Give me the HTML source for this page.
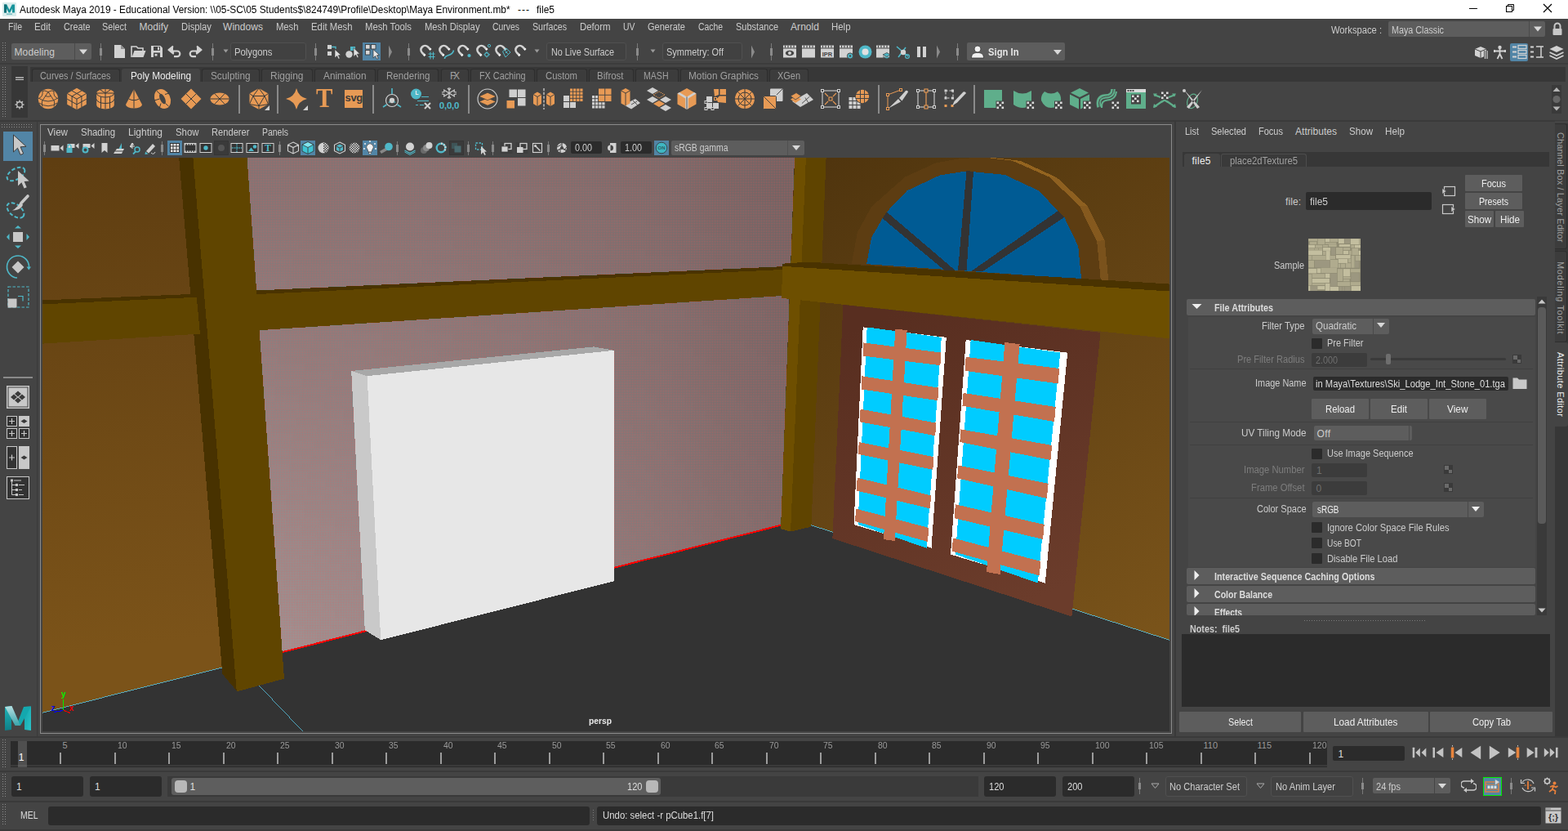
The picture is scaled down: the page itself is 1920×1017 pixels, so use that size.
<!DOCTYPE html>
<html><head><meta charset="utf-8"><title>Autodesk Maya 2019</title>
<style>
html,body{margin:0;padding:0;background:#444444;}
body{width:1920px;height:1017px;overflow:hidden;position:relative;font-family:"Liberation Sans",sans-serif;}
#app{position:absolute;left:0;top:0;width:1920px;height:1017px;overflow:hidden;background:#444444;}
#app div,#app span,#app svg{position:absolute;box-sizing:border-box;}
#app span{white-space:pre;line-height:1;}
</style></head><body><div id="app">
<div style="left:0px;top:0px;width:1920px;height:23px;background:#ffffff;"></div>
<div style="left:0px;top:77px;width:1920px;height:2px;background:#3c3c3c;"></div>
<div style="left:37px;top:82px;width:1880px;height:18px;background:#373737;"></div>
<div style="left:0px;top:147px;width:1920px;height:2px;background:#3a3a3a;"></div>
<div style="left:49px;top:152px;width:1386px;height:746px;background:transparent;border:1px solid #8a8a8a;"></div>
<div style="left:44.5px;top:149px;width:1.5px;height:752px;background:#3a3a3a;"></div>
<div style="left:1438px;top:149px;width:2px;height:752px;background:#3a3a3a;"></div>
<div style="left:0px;top:901px;width:1920px;height:2px;background:#3a3a3a;"></div>
<svg style="left:52px;top:193px" width="1380" height="702" viewBox="52 193 1380 702" shape-rendering="crispEdges">
<defs>
<pattern id="sel" x="0" y="1" width="2" height="2" patternUnits="userSpaceOnUse"><rect width="1" height="1" fill="#fa5050" fill-opacity="0.6"/></pattern>
<linearGradient id="wh" gradientUnits="userSpaceOnUse" x1="320" y1="0" x2="950" y2="0"><stop offset="0" stop-color="#777777"/><stop offset="0.25" stop-color="#777777"/><stop offset="0.5" stop-color="#747474"/><stop offset="0.75" stop-color="#6f6f6f"/><stop offset="1" stop-color="#666666"/></linearGradient>
<linearGradient id="wv" gradientUnits="userSpaceOnUse" x1="0" y1="205" x2="0" y2="805"><stop offset="0" stop-color="#ffffff" stop-opacity="0"/><stop offset="1" stop-color="#ffffff" stop-opacity="0.25"/></linearGradient>
<linearGradient id="wmh" gradientUnits="userSpaceOnUse" x1="320" y1="0" x2="950" y2="0"><stop offset="0" stop-color="#ffffff" stop-opacity="1"/><stop offset="1" stop-color="#ffffff" stop-opacity="0.33"/></linearGradient>
<mask id="wm" maskUnits="userSpaceOnUse" x="52" y="193" width="1380" height="702"><rect x="52" y="193" width="1380" height="702" fill="url(#wmh)"/></mask>
<linearGradient id="lw" gradientUnits="userSpaceOnUse" x1="60" y1="198" x2="131.5" y2="794"><stop offset="0" stop-color="#5f3e11"/><stop offset="1" stop-color="#7b5319"/></linearGradient>
<linearGradient id="rw" gradientUnits="userSpaceOnUse" x1="1015" y1="195" x2="1398" y2="781"><stop offset="0" stop-color="#50350e"/><stop offset="1" stop-color="#79531a"/></linearGradient>
<linearGradient id="wf" gradientUnits="userSpaceOnUse" x1="1100" y1="380" x2="1250" y2="740"><stop offset="0" stop-color="#582e20"/><stop offset="1" stop-color="#6b3c2b"/></linearGradient>
</defs>
<rect x="52" y="193" width="1380" height="702" fill="#333333"/>
<polygon points="51,193 305,193 345,800 271.7,817 51,872.5" fill="url(#lw)" />
<polygon points="300,193 975,193 958,642.3 345.6,798.2" fill="url(#wh)" />
<polygon points="300,193 975,193 958,642.3 345.6,798.2" fill="url(#wv)" mask="url(#wm)"/>
<polygon points="300,193 975,193 958,642.3 345.6,798.2" fill="url(#sel)" />
<line x1="345.6" y1="798.2" x2="956" y2="642.8" stroke="#ff0000" stroke-width="2"/>
<polygon points="973,193 1433,193 1433,783.8 993.4,642.8 956,647" fill="url(#rw)" />
<line x1="51" y1="872.5" x2="271.7" y2="817" stroke="#5cd0f0" stroke-width="0.75"/>
<line x1="315.6" y1="837.2" x2="370.7" y2="895" stroke="#5cd0f0" stroke-width="0.75"/>
<line x1="993.4" y1="642.8" x2="1433" y2="783.6" stroke="#5cd0f0" stroke-width="0.75"/>
<polygon points="305,356 313.7,355.5 958,326.2 958,330 305,360.5" fill="#4a3300" />
<polygon points="305,360.5 958,330 958,362 317.5,404.2 305,405" fill="#604500" />
<polygon points="219.2,193 236.9,193 290.5,846.3 272.4,825.0" fill="#483200" />
<polygon points="51,367.5 233,360 240.8,363.8 51,372.4" fill="#483200" />
<polygon points="51,372.4 240.8,363.8 244.9,408.6 51,420.7" fill="#604500" />
<polygon points="236.4,193 302.5,193 348,830.6 289.8,846.5" fill="#604500" />
<polygon points="973.3,193 986.9,193 968.1,650.6 956.1,647.2" fill="#6e4f00" />
<polygon points="986.9,193 1011.6,193 993.4,644.6 968.1,650.6" fill="#5f4400" />
<polygon points="1042.8,322.7 1049.9,284.4 1067.2,252.9 1108.1,216.7 1145.9,199.4 1177.3,193.9 1200,193 1213.4,193 1237.8,195.5 1250.3,197.1 1294.4,217.5 1331.4,252.1 1352.6,293.8 1357.3,343.4" fill="#5d3d12" />
<polygon points="1213.4,192.8 1237.8,195.5 1239.3,196.6 1213.4,193.6" fill="#94641f" />
<polygon points="1237.8,195.5 1250.3,197.1 1250.3,201.4 1239.3,196.6" fill="#94641f" />
<polygon points="1250.3,197.1 1294.4,217.5 1285,216.7 1250.3,201.4" fill="#94641f" />
<polygon points="1294.4,217.5 1331.4,252.1 1321.9,252.1 1285,216.7" fill="#8e6020" />
<polygon points="1331.4,252.1 1352.6,293.8 1343.2,295.4 1321.9,252.1" fill="#85591e" />
<polygon points="1352.6,293.8 1357.3,343.4 1347.9,343.4 1343.2,295.4" fill="#7a521c" />
<polygon points="1061.1,323.2 1067.1,290.7 1080.6,267.2 1085.8,259.4 1110.6,233.4 1150.9,214.4 1183.5,209.4 1230.4,213.9 1272,233.4 1295.5,258.1 1303.3,265.9 1320.2,301.1 1324.1,341.5" fill="#005b94" />
<polygon points="1183.5,209.4 1192,209.6 1183.5,331 1173,331" fill="#333333" />
<polygon points="1080.6,267.2 1085.8,259.4 1169.2,330.5 1156.1,330.5" fill="#333333" />
<polygon points="1295.5,258.1 1303.3,265.9 1203,332.3 1188.7,332.3" fill="#333333" />
<polygon points="958.2,322.7 990,320.6 1433,347.6 1433,356.6 958.2,326" fill="#4a3300" />
<polygon points="958.2,325.8 1433,356.6 1433,414.4 957,364.9" fill="#6d4f00" />
<polygon points="1032.4,373 1347.5,406.9 1312.4,754.5 1019.4,659" fill="url(#wf)" />
<polygon points="1056.7,400.4 1158.8,412.9 1140.5,670.7 1045.5,642" fill="#ffffff" />
<polygon points="1061.7,400.4 1152.8,412.9 1134.5,670.7 1050.5,642" fill="#00ccff" />
<polygon points="1096.3,402.5 1110.6,404.2 1095.7,662 1082,660" fill="#c27150" />
<polygon points="1057.3192052980132,419.4 1152.472575640031,431.6 1151.3652055857253,447.2 1056.5728476821193,435.5" fill="#c27150" />
<polygon points="1055.4231788079471,460.3 1149.4202094647012,474.6 1148.3128394103956,490.2 1054.676821192053,476.4" fill="#c27150" />
<polygon points="1053.5549668874173,500.6 1146.3678432893716,517.6 1145.260473235066,533.2 1052.8271523178807,516.3" fill="#c27150" />
<polygon points="1051.682119205298,541 1143.4148564778898,559.2 1142.3074864235841,574.8 1050.9960264900662,555.8" fill="#c27150" />
<polygon points="1049.6562913907285,584.7 1140.0643522110163,606.4 1138.9214895267648,622.5 1048.9284768211921,600.4" fill="#c27150" />
<polygon points="1047.9039735099338,622.5 1137.2533359193174,646 1136.0465865011638,663 1047.1854304635763,638" fill="#c27150" />
<polygon points="1182.7,416 1307.2,431.6 1279.8,713.6 1164,678.5" fill="#ffffff" />
<polygon points="1188.7,416 1298.2,431.6 1270.8,713.6 1170,678.5" fill="#00ccff" />
<polygon points="1230.4,419 1248.6,421.2 1224.5,703 1208,700" fill="#c27150" />
<polygon points="1182.7182476190476,436.8 1297.315035460993,451 1295.5272340425531,469.4 1181.5072,453.8" fill="#c27150" />
<polygon points="1179.5695238095238,481 1292.7483687943263,498 1290.9994326241135,516 1178.4510857142857,496.7" fill="#c27150" />
<polygon points="1176.4065523809525,525.4 1288.1817021276595,545 1286.432765957447,563 1175.2952380952381,541" fill="#c27150" />
<polygon points="1173.2578285714285,569.6 1283.6344680851064,591.8 1281.86609929078,610 1172.1393904761906,585.3" fill="#c27150" />
<polygon points="1169.8597714285715,617.3 1278.7568794326241,642 1277.0079432624113,660 1168.6558476190476,634.2" fill="#c27150" />
<polygon points="1166.9318857142857,658.4 1274.3845390070921,687 1272.684184397163,704.5 1165.7778285714285,674.6" fill="#c27150" />
<polygon points="430.2,454.0 727,424.4 752,428.8 449.6,460.2" fill="#a8a8a8" />
<polygon points="430.2,454.0 449.6,460.2 466.3,783.2 446.8,771.2" fill="#c9c9c9" />
<polygon points="449.6,460.2 752,428.8 752,711.2 466.3,783.2" fill="#e7e7e7" />
<line x1="77.5" y1="856" x2="77.5" y2="869" stroke="#00ee00" stroke-width="1.2"/>
<line x1="77" y1="869.5" x2="66" y2="871.5" stroke="#0000ee" stroke-width="1.2"/>
<line x1="78" y1="869.5" x2="86" y2="872.5" stroke="#ee0000" stroke-width="1.2"/>
<text x="75" y="852.5" font-family="Liberation Sans,sans-serif" font-size="10" font-weight="bold" fill="#00ee00">y</text>
<text x="62.5" y="869.5" font-family="Liberation Sans,sans-serif" font-size="10" font-weight="bold" fill="#0000ee">z</text>
<text x="84.5" y="870" font-family="Liberation Sans,sans-serif" font-size="10" font-weight="bold" fill="#ee0000">x</text>
</svg>
<span style="left:721.00px;top:876.69px;font-size:11px;color:#e8e8e8;font-weight:bold;transform:scaleX(0.9348);transform-origin:0 0;">persp</span>
<svg style="left:3px;top:3px" width="17" height="17" viewBox="0 0 17 17" ><rect x="0" y="0" width="17" height="17" rx="1" fill="#d9ecec"/><path d="M2 2.5 L5.2 2.5 L8.5 9 L11.8 2.5 L15 2.5 L15 12.5 L12 12.5 L12 7.5 L9.3 12.5 L7.7 12.5 L5 7.5 L5 12.5 L2 12.5 Z" fill="#17939b"/><path d="M2 2.5 L5.2 2.5 L5 12.5 L2 12.5 Z" fill="#0e6f77"/><rect x="5" y="13.6" width="7" height="1.2" fill="#5fb3b8"/></svg>
<span style="left:23.50px;top:5.84px;font-size:12px;color:#000000;transform:scaleX(0.9893);transform-origin:0 0;">Autodesk Maya 2019 - Educational Version: \\05-SC\05 Students$\824749\Profile\Desktop\Maya Environment.mb*</span>
<span style="left:634.00px;top:5.84px;font-size:12px;color:#000000;letter-spacing:1.007px;">---</span>
<span style="left:657.00px;top:5.84px;font-size:12px;color:#000000;transform:scaleX(0.9994);transform-origin:0 0;">file5</span>
<svg style="left:1790px;top:-1px" width="130" height="23" viewBox="0 0 130 23" ><path d="M9 11.5 H19" stroke="#000" stroke-width="1" fill="none"/><rect x="54.5" y="8.5" width="7" height="7" fill="none" stroke="#000" stroke-width="1"/><path d="M56.5 8.5 V6.5 H63.5 V13.5 H61.5" fill="none" stroke="#000" stroke-width="1"/><path d="M100 6 L110 16 M110 6 L100 16" stroke="#000" stroke-width="1.2" fill="none"/></svg>
<span style="left:9.50px;top:26.84px;font-size:12px;color:#cccccc;transform:scaleX(0.8792);transform-origin:0 0;">File</span>
<span style="left:42.00px;top:26.84px;font-size:12px;color:#cccccc;transform:scaleX(0.9672);transform-origin:0 0;">Edit</span>
<span style="left:77.50px;top:26.84px;font-size:12px;color:#cccccc;transform:scaleX(0.9024);transform-origin:0 0;">Create</span>
<span style="left:125.00px;top:26.84px;font-size:12px;color:#cccccc;transform:scaleX(0.8995);transform-origin:0 0;">Select</span>
<span style="left:170.50px;top:26.84px;font-size:12px;color:#cccccc;letter-spacing:0.032px;">Modify</span>
<span style="left:221.50px;top:26.84px;font-size:12px;color:#cccccc;transform:scaleX(0.9404);transform-origin:0 0;">Display</span>
<span style="left:273.00px;top:26.84px;font-size:12px;color:#cccccc;letter-spacing:0.054px;">Windows</span>
<span style="left:337.50px;top:26.84px;font-size:12px;color:#cccccc;transform:scaleX(0.9372);transform-origin:0 0;">Mesh</span>
<span style="left:380.50px;top:26.84px;font-size:12px;color:#cccccc;transform:scaleX(0.9465);transform-origin:0 0;">Edit Mesh</span>
<span style="left:446.50px;top:26.84px;font-size:12px;color:#cccccc;transform:scaleX(0.9426);transform-origin:0 0;">Mesh Tools</span>
<span style="left:519.50px;top:26.84px;font-size:12px;color:#cccccc;transform:scaleX(0.9372);transform-origin:0 0;">Mesh Display</span>
<span style="left:602.50px;top:26.84px;font-size:12px;color:#cccccc;transform:scaleX(0.8682);transform-origin:0 0;">Curves</span>
<span style="left:651.50px;top:26.84px;font-size:12px;color:#cccccc;transform:scaleX(0.8870);transform-origin:0 0;">Surfaces</span>
<span style="left:709.50px;top:26.84px;font-size:12px;color:#cccccc;transform:scaleX(0.9533);transform-origin:0 0;">Deform</span>
<span style="left:762.50px;top:26.84px;font-size:12px;color:#cccccc;transform:scaleX(0.8698);transform-origin:0 0;">UV</span>
<span style="left:792.50px;top:26.84px;font-size:12px;color:#cccccc;transform:scaleX(0.9195);transform-origin:0 0;">Generate</span>
<span style="left:854.50px;top:26.84px;font-size:12px;color:#cccccc;transform:scaleX(0.8649);transform-origin:0 0;">Cache</span>
<span style="left:900.50px;top:26.84px;font-size:12px;color:#cccccc;transform:scaleX(0.9170);transform-origin:0 0;">Substance</span>
<span style="left:968.00px;top:26.84px;font-size:12px;color:#cccccc;letter-spacing:0.063px;">Arnold</span>
<span style="left:1018.00px;top:26.84px;font-size:12px;color:#cccccc;transform:scaleX(0.9522);transform-origin:0 0;">Help</span>
<span style="left:1630.00px;top:30.84px;font-size:12px;color:#cccccc;transform:scaleX(0.9328);transform-origin:0 0;">Workspace :</span>
<div style="left:1700px;top:26px;width:192px;height:19px;background:#5d5d5d;border-radius:2px;"></div>
<div style="left:1872px;top:26px;width:1px;height:19px;background:#4a4a4a;"></div>
<span style="left:1703.50px;top:30.84px;font-size:12px;color:#cccccc;transform:scaleX(0.8970);transform-origin:0 0;">Maya Classic</span>
<svg style="left:1876.5px;top:31px" width="12" height="9" viewBox="0 0 12 9" ><path d="M1 1.5 H11 L6 7.5 Z" fill="#d8d8d8"/></svg>
<svg style="left:1898.5px;top:26px" width="16" height="19" viewBox="0 0 16 19" ><path d="M4.5 9 V6 a3.5 3.5 0 0 1 7 0 V9" fill="none" stroke="#c8c8c8" stroke-width="2"/><rect x="2.5" y="9" width="11" height="8" rx="1" fill="#c8c8c8"/></svg>
<svg style="left:3px;top:52px" width="4" height="23" viewBox="0 0 4 23" shape-rendering="crispEdges"><rect x="0" y="0" width="1" height="1" fill="#8c8c8c"/><rect x="3" y="0" width="1" height="1" fill="#8c8c8c"/><rect x="0" y="3" width="1" height="1" fill="#8c8c8c"/><rect x="3" y="3" width="1" height="1" fill="#8c8c8c"/><rect x="0" y="6" width="1" height="1" fill="#8c8c8c"/><rect x="3" y="6" width="1" height="1" fill="#8c8c8c"/><rect x="0" y="9" width="1" height="1" fill="#8c8c8c"/><rect x="3" y="9" width="1" height="1" fill="#8c8c8c"/><rect x="0" y="12" width="1" height="1" fill="#8c8c8c"/><rect x="3" y="12" width="1" height="1" fill="#8c8c8c"/><rect x="0" y="15" width="1" height="1" fill="#8c8c8c"/><rect x="3" y="15" width="1" height="1" fill="#8c8c8c"/><rect x="0" y="18" width="1" height="1" fill="#8c8c8c"/><rect x="3" y="18" width="1" height="1" fill="#8c8c8c"/><rect x="0" y="21" width="1" height="1" fill="#8c8c8c"/><rect x="3" y="21" width="1" height="1" fill="#8c8c8c"/></svg>
<div style="left:14px;top:53px;width:98px;height:20px;background:#5d5d5d;border-radius:2px;"></div>
<div style="left:91px;top:53px;width:1px;height:20px;background:#4a4a4a;"></div>
<span style="left:17.50px;top:57.84px;font-size:12px;color:#cccccc;letter-spacing:0.115px;">Modeling</span>
<svg style="left:96px;top:59px" width="12" height="9" viewBox="0 0 12 9" ><path d="M1 1.5 H11 L6 7.5 Z" fill="#d8d8d8"/></svg>
<div style="left:123px;top:53px;width:1px;height:21px;background:#7a7a7a;"></div>
<div style="left:122px;top:59px;width:3px;height:9px;background:#8a8a8a;"></div>
<svg style="left:139px;top:54px" width="16" height="18" viewBox="0 0 16 18" ><path d="M1 1 H9 L14 6 V17 H1 Z" fill="#d2d2d2"/><path d="M9 1 V6 H14" fill="#8f8f8f"/></svg>
<svg style="left:160px;top:55px" width="19" height="16" viewBox="0 0 19 16" ><path d="M1 15 V2 H7 L9 4 H15 V7" fill="none" stroke="#d2d2d2" stroke-width="1.6"/><path d="M4.5 7 H18.5 L15.5 15 H1.5 Z" fill="#d2d2d2"/></svg>
<svg style="left:184px;top:55px" width="16" height="16" viewBox="0 0 16 16" ><path d="M1 1 H12.5 L15 3.5 V15 H1 Z" fill="#d2d2d2"/><rect x="4" y="2" width="8" height="5" fill="#444"/><rect x="9" y="2.6" width="2" height="3.6" fill="#d2d2d2"/><rect x="4" y="9.5" width="8" height="5.5" fill="#444"/><rect x="5.5" y="11" width="3" height="2.5" fill="#d2d2d2"/></svg>
<svg style="left:205px;top:55px" width="19" height="16" viewBox="0 0 19 16" ><path d="M7 1.5 L1.5 6 L7 10.5 V7.5 H12 a3.3 3.3 0 0 1 0 6.6 H8" fill="none" stroke="#d2d2d2" stroke-width="2.2" stroke-linejoin="round"/><path d="M7 1.5 L1.5 6 L7 10.5 Z" fill="#d2d2d2"/></svg>
<svg style="left:229px;top:55px" width="19" height="16" viewBox="0 0 19 16" ><path d="M12 1.5 L17.5 6 L12 10.5 V7.5 H7 a3.3 3.3 0 0 0 0 6.6 H11" fill="none" stroke="#d2d2d2" stroke-width="2.2" stroke-linejoin="round"/><path d="M12 1.5 L17.5 6 L12 10.5 Z" fill="#d2d2d2"/></svg>
<div style="left:260px;top:53px;width:1px;height:21px;background:#7a7a7a;"></div>
<div style="left:259px;top:59px;width:3px;height:9px;background:#8a8a8a;"></div>
<svg style="left:273px;top:60px" width="7" height="5" viewBox="0 0 7 5" ><path d="M0.5 0.5 H6.5 L3.5 4.5 Z" fill="#9a9a9a"/></svg>
<div style="left:282px;top:52px;width:93px;height:22px;background:#414141;border:1px solid #505050;border-radius:3px;"></div>
<span style="left:287.00px;top:57.84px;font-size:12px;color:#cccccc;transform:scaleX(0.9420);transform-origin:0 0;">Polygons</span>
<div style="left:386px;top:53px;width:1px;height:21px;background:#7a7a7a;"></div>
<div style="left:385px;top:59px;width:3px;height:9px;background:#8a8a8a;"></div>
<svg style="left:400px;top:54px" width="18" height="19" viewBox="0 0 18 19" ><rect x="1" y="1" width="5" height="5" fill="#d2d2d2"/><rect x="1" y="9" width="5" height="5" fill="#d2d2d2"/><path d="M6 3.5 H11 V6" fill="none" stroke="#4fb8c8" stroke-width="1.3"/><path d="M10 6.5 L10 17 L12.6 14.4 L14.5 18.3 L16.2 17.5 L14.4 13.7 L17.6 13.4 Z" fill="#e0e0e0" stroke="#333" stroke-width="0.6"/></svg>
<svg style="left:422px;top:54px" width="20" height="19" viewBox="0 0 20 19" ><circle cx="5.5" cy="12.5" r="4.2" fill="#d2d2d2"/><path d="M7 8 V3 H13 V8" fill="#4fb8c8"/><path d="M11 4.5 L11 15.5 L13.6 12.9 L15.5 16.8 L17.2 16 L15.4 12.2 L18.6 11.9 Z" fill="#e0e0e0" stroke="#333" stroke-width="0.6"/></svg>
<div style="left:444px;top:52px;width:22px;height:22px;background:#5285a6;"></div>
<svg style="left:446px;top:53px" width="20" height="20" viewBox="0 0 20 20" ><rect x="1.5" y="1.5" width="5.5" height="5.5" fill="#d8d8d8" stroke="#333" stroke-width="0.8"/><rect x="8.5" y="1.5" width="5.5" height="5.5" fill="#d8d8d8" stroke="#333" stroke-width="0.8"/><rect x="1.5" y="8.5" width="5.5" height="5.5" fill="#d8d8d8" stroke="#333" stroke-width="0.8"/><path d="M11 7.5 L11 18 L13.6 15.4 L15.5 19.3 L17.2 18.5 L15.4 14.7 L18.6 14.4 Z" fill="#e8e8e8" stroke="#333" stroke-width="0.7"/></svg>
<svg style="left:475px;top:55px" width="6" height="17" viewBox="0 0 6 17" ><path d="M1 0.5 L5 8.5 L1 16.5 Z" fill="#8a8a8a"/></svg>
<div style="left:500px;top:53px;width:1px;height:21px;background:#7a7a7a;"></div>
<div style="left:499px;top:59px;width:3px;height:9px;background:#8a8a8a;"></div>
<svg style="left:514px;top:53px" width="21" height="21" viewBox="0 0 21 21" ><path d="M12.7 10.1 L10 7.4 A5 5 0 0 0 3 14.6 L5.7 17.3" transform="translate(0,-3)" fill="none" stroke="#d2d2d2" stroke-width="2.7"/><path d="M13.6 11 L12.2 9.6 M6.6 18.2 L5.2 16.8" transform="translate(0,-3)" stroke="#f4f4f4" stroke-width="2.7"/><path d="M13 10.5 V19.5 M16.5 10.5 V19.5 M10.5 13 H18.5 M10.5 16.5 H18.5" stroke="#4fb8c8" stroke-width="1.1" fill="none"/></svg>
<svg style="left:537px;top:53px" width="21" height="21" viewBox="0 0 21 21" ><path d="M12.7 10.1 L10 7.4 A5 5 0 0 0 3 14.6 L5.7 17.3" transform="translate(0,-3)" fill="none" stroke="#d2d2d2" stroke-width="2.7"/><path d="M13.6 11 L12.2 9.6 M6.6 18.2 L5.2 16.8" transform="translate(0,-3)" stroke="#f4f4f4" stroke-width="2.7"/><path d="M7.5 19 C7 13 17 17 18.5 8.5" stroke="#4fb8c8" stroke-width="1.6" fill="none"/></svg>
<svg style="left:560px;top:53px" width="21" height="21" viewBox="0 0 21 21" ><path d="M12.7 10.1 L10 7.4 A5 5 0 0 0 3 14.6 L5.7 17.3" transform="translate(0,-3)" fill="none" stroke="#d2d2d2" stroke-width="2.7"/><path d="M13.6 11 L12.2 9.6 M6.6 18.2 L5.2 16.8" transform="translate(0,-3)" stroke="#f4f4f4" stroke-width="2.7"/><circle cx="14.5" cy="15" r="2.1" fill="#4fb8c8"/></svg>
<svg style="left:583px;top:53px" width="21" height="21" viewBox="0 0 21 21" ><path d="M12.7 10.1 L10 7.4 A5 5 0 0 0 3 14.6 L5.7 17.3" transform="translate(0,-3)" fill="none" stroke="#d2d2d2" stroke-width="2.7"/><path d="M13.6 11 L12.2 9.6 M6.6 18.2 L5.2 16.8" transform="translate(0,-3)" stroke="#f4f4f4" stroke-width="2.7"/><circle cx="13" cy="13.8" r="2.2" fill="none" stroke="#4fb8c8" stroke-width="1.1"/><path d="M13 10 V11.5 M13 16 V17.5 M9.5 13.8 H10.8 M15.2 13.8 H17" stroke="#4fb8c8" stroke-width="1"/><circle cx="16" cy="3" r="1.6" fill="none" stroke="#4fb8c8" stroke-width="1"/></svg>
<svg style="left:606px;top:53px" width="21" height="21" viewBox="0 0 21 21" ><path d="M12.7 10.1 L10 7.4 A5 5 0 0 0 3 14.6 L5.7 17.3" transform="translate(0,-3)" fill="none" stroke="#d2d2d2" stroke-width="2.7"/><path d="M13.6 11 L12.2 9.6 M6.6 18.2 L5.2 16.8" transform="translate(0,-3)" stroke="#f4f4f4" stroke-width="2.7"/><path d="M9.5 10 L14 6 L19 11 L13 17 Z M11.5 8 L16.5 13.5 M13 12 L15.5 9.5" fill="none" stroke="#4fb8c8" stroke-width="1"/></svg>
<svg style="left:630px;top:53px" width="21" height="21" viewBox="0 0 21 21" ><path d="M12.7 10.1 L10 7.4 A5 5 0 0 0 3 14.6 L5.7 17.3" transform="translate(0,-3)" fill="none" stroke="#d2d2d2" stroke-width="2.7"/><path d="M13.6 11 L12.2 9.6 M6.6 18.2 L5.2 16.8" transform="translate(0,-3)" stroke="#f4f4f4" stroke-width="2.7"/></svg>
<svg style="left:654px;top:60px" width="7" height="5" viewBox="0 0 7 5" ><path d="M0.5 0.5 H6.5 L3.5 4.5 Z" fill="#9a9a9a"/></svg>
<div style="left:669px;top:52px;width:98px;height:22px;background:#414141;border:1px solid #505050;border-radius:3px;"></div>
<span style="left:674.50px;top:57.84px;font-size:12px;color:#cccccc;transform:scaleX(0.9019);transform-origin:0 0;">No Live Surface</span>
<div style="left:780px;top:53px;width:1px;height:21px;background:#7a7a7a;"></div>
<div style="left:779px;top:59px;width:3px;height:9px;background:#8a8a8a;"></div>
<svg style="left:796px;top:60px" width="7" height="5" viewBox="0 0 7 5" ><path d="M0.5 0.5 H6.5 L3.5 4.5 Z" fill="#9a9a9a"/></svg>
<div style="left:811px;top:52px;width:98px;height:22px;background:#414141;border:1px solid #505050;border-radius:3px;"></div>
<span style="left:816.00px;top:57.84px;font-size:12px;color:#cccccc;transform:scaleX(0.9156);transform-origin:0 0;">Symmetry: Off</span>
<svg style="left:919px;top:55px" width="6" height="17" viewBox="0 0 6 17" ><path d="M1 0.5 L5 8.5 L1 16.5 Z" fill="#8a8a8a"/></svg>
<div style="left:944px;top:53px;width:1px;height:21px;background:#7a7a7a;"></div>
<div style="left:943px;top:59px;width:3px;height:9px;background:#8a8a8a;"></div>
<svg style="left:958px;top:54px" width="19" height="19" viewBox="0 0 19 19" ><rect x="1" y="5.5" width="16" height="11" fill="#d2d2d2"/><path d="M1 1.5 H17 V4.5 H1 Z" fill="#d2d2d2"/><path d="M3.5 1.5 V4.5 M7 1.5 V4.5 M10.5 1.5 V4.5 M14 1.5 V4.5" stroke="#444" stroke-width="1.1"/><ellipse cx="9" cy="11" rx="5.2" ry="3.3" fill="#444"/><circle cx="9" cy="11" r="2" fill="#d2d2d2"/></svg>
<svg style="left:981px;top:54px" width="19" height="19" viewBox="0 0 19 19" ><rect x="1" y="5.5" width="16" height="11" fill="#d2d2d2"/><path d="M1 1.5 H17 V4.5 H1 Z" fill="#d2d2d2"/><path d="M3.5 1.5 V4.5 M7 1.5 V4.5 M10.5 1.5 V4.5 M14 1.5 V4.5" stroke="#444" stroke-width="1.1"/></svg>
<svg style="left:1004px;top:54px" width="19" height="19" viewBox="0 0 19 19" ><rect x="1" y="5.5" width="16" height="11" fill="#d2d2d2"/><path d="M1 1.5 H17 V4.5 H1 Z" fill="#d2d2d2"/><path d="M3.5 1.5 V4.5 M7 1.5 V4.5 M10.5 1.5 V4.5 M14 1.5 V4.5" stroke="#444" stroke-width="1.1"/><text x="9" y="14.5" font-family="Liberation Sans,sans-serif" font-size="7.5" font-weight="bold" text-anchor="middle" fill="#444">IPR</text></svg>
<svg style="left:1027px;top:54px" width="19" height="19" viewBox="0 0 19 19" ><rect x="1" y="5.5" width="16" height="11" fill="#d2d2d2"/><path d="M1 1.5 H17 V4.5 H1 Z" fill="#d2d2d2"/><path d="M3.5 1.5 V4.5 M7 1.5 V4.5 M10.5 1.5 V4.5 M14 1.5 V4.5" stroke="#444" stroke-width="1.1"/><circle cx="14" cy="14.5" r="3.6" fill="#4fb8c8" stroke="#444" stroke-width="1"/><circle cx="14" cy="14.5" r="1.2" fill="#444"/></svg>
<svg style="left:1050px;top:54px" width="19" height="19" viewBox="0 0 19 19" ><circle cx="9.5" cy="9.5" r="8" fill="#4fb8c8"/><circle cx="9.5" cy="9.5" r="4" fill="#e0e0e0"/></svg>
<svg style="left:1072px;top:54px" width="19" height="19" viewBox="0 0 19 19" ><rect x="1" y="5.5" width="16" height="11" fill="#d2d2d2"/><path d="M1 1.5 H17 V4.5 H1 Z" fill="#d2d2d2"/><path d="M3.5 1.5 V4.5 M7 1.5 V4.5 M10.5 1.5 V4.5 M14 1.5 V4.5" stroke="#444" stroke-width="1.1"/><path d="M9 13 L14 10.5 L18 13 L14 15.5 Z M9 15.5 L14 18 L18 15.5" fill="#4fb8c8" stroke="#444" stroke-width="0.8"/></svg>
<svg style="left:1096px;top:54px" width="20" height="19" viewBox="0 0 20 19" ><path d="M2 3 L16 15 M4 16 L13 4" stroke="#4fb8c8" stroke-width="1.6"/><circle cx="10" cy="10" r="3.2" fill="#d2d2d2"/><circle cx="15" cy="15" r="2.4" fill="none" stroke="#4fb8c8" stroke-width="1.2"/></svg>
<div style="left:1123px;top:57px;width:4px;height:13px;background:#d2d2d2;"></div>
<div style="left:1130px;top:57px;width:4px;height:13px;background:#d2d2d2;"></div>
<svg style="left:1146px;top:55px" width="6" height="17" viewBox="0 0 6 17" ><path d="M1 0.5 L5 8.5 L1 16.5 Z" fill="#8a8a8a"/></svg>
<div style="left:1172px;top:53px;width:1px;height:21px;background:#7a7a7a;"></div>
<div style="left:1171px;top:59px;width:3px;height:9px;background:#8a8a8a;"></div>
<div style="left:1184px;top:52px;width:120px;height:22px;background:#5d5d5d;border-radius:2px;"></div>
<svg style="left:1188px;top:54px" width="18" height="18" viewBox="0 0 18 18" ><circle cx="9" cy="6" r="4" fill="#f0f0f0" stroke="#333" stroke-width="0.8"/><path d="M1.5 17 C1.5 11.5 5 10.5 9 10.5 C13 10.5 16.5 11.5 16.5 17 Z" fill="#f0f0f0" stroke="#333" stroke-width="0.8"/></svg>
<span style="left:1210.00px;top:57.84px;font-size:12px;color:#e6e6e6;font-weight:bold;transform:scaleX(0.9376);transform-origin:0 0;">Sign In</span>
<svg style="left:1289px;top:60px" width="12" height="8" viewBox="0 0 12 8" ><path d="M1 1 H11 L6 7 Z" fill="#d8d8d8"/></svg>
<svg style="left:1804px;top:54px" width="19" height="19" viewBox="0 0 19 19" ><path d="M2 6 L9 3 L16 6 V14 L9 17 L2 14 Z" fill="#d2d2d2"/><path d="M2 6 L9 9 L16 6 M9 9 V17" stroke="#444" stroke-width="1" fill="none"/><path d="M13 8 H18 V18 H13 Z" fill="#444"/><path d="M14.5 8 V18 M17 8 V18" stroke="#d2d2d2" stroke-width="1.2"/></svg>
<svg style="left:1827px;top:54px" width="19" height="19" viewBox="0 0 19 19" ><circle cx="9.5" cy="4" r="2.2" fill="#d2d2d2"/><path d="M9.5 6 V12 M4 8.5 H15 M9.5 12 L6.5 18 M9.5 12 L12.5 18" stroke="#d2d2d2" stroke-width="1.8" fill="none"/><path d="M2 8.5 h2 M15 8.5 h2" stroke="#d2d2d2" stroke-width="3"/></svg>
<div style="left:1849px;top:53px;width:22px;height:22px;background:#5285a6;border-radius:2px;"></div>
<svg style="left:1851px;top:54px" width="19" height="19" viewBox="0 0 19 19" ><path d="M1 3.5 H6 M1 9.5 H6 M1 15.5 H6" stroke="#d2d2d2" stroke-width="2.2"/><rect x="8" y="1.5" width="10" height="4" fill="none" stroke="#d2d2d2" stroke-width="1.2"/><rect x="8" y="7.5" width="10" height="4" fill="none" stroke="#d2d2d2" stroke-width="1.2"/><rect x="8" y="13.5" width="10" height="4" fill="none" stroke="#d2d2d2" stroke-width="1.2"/></svg>
<svg style="left:1873px;top:54px" width="19" height="19" viewBox="0 0 19 19" ><path d="M1 3.5 H5 M1 9.5 H5 M1 15.5 H5" stroke="#d2d2d2" stroke-width="2.2"/><path d="M8 3 H17 M14 3 V16 M8 16 H17" stroke="#d2d2d2" stroke-width="1.5" fill="none"/></svg>
<svg style="left:1896px;top:54px" width="20" height="19" viewBox="0 0 20 19" ><path d="M1.5 6 L10 2 L18.5 6 L10 10 Z" fill="#d2d2d2"/><path d="M1.5 10 L10 14 L18.5 10 M1.5 14 L10 18 L18.5 14" stroke="#d2d2d2" stroke-width="1.6" fill="none"/></svg>
<svg style="left:3px;top:82px" width="4" height="61" viewBox="0 0 4 61" shape-rendering="crispEdges"><rect x="0" y="0" width="1" height="1" fill="#8c8c8c"/><rect x="3" y="0" width="1" height="1" fill="#8c8c8c"/><rect x="0" y="3" width="1" height="1" fill="#8c8c8c"/><rect x="3" y="3" width="1" height="1" fill="#8c8c8c"/><rect x="0" y="6" width="1" height="1" fill="#8c8c8c"/><rect x="3" y="6" width="1" height="1" fill="#8c8c8c"/><rect x="0" y="9" width="1" height="1" fill="#8c8c8c"/><rect x="3" y="9" width="1" height="1" fill="#8c8c8c"/><rect x="0" y="12" width="1" height="1" fill="#8c8c8c"/><rect x="3" y="12" width="1" height="1" fill="#8c8c8c"/><rect x="0" y="15" width="1" height="1" fill="#8c8c8c"/><rect x="3" y="15" width="1" height="1" fill="#8c8c8c"/><rect x="0" y="18" width="1" height="1" fill="#8c8c8c"/><rect x="3" y="18" width="1" height="1" fill="#8c8c8c"/><rect x="0" y="21" width="1" height="1" fill="#8c8c8c"/><rect x="3" y="21" width="1" height="1" fill="#8c8c8c"/><rect x="0" y="24" width="1" height="1" fill="#8c8c8c"/><rect x="3" y="24" width="1" height="1" fill="#8c8c8c"/><rect x="0" y="27" width="1" height="1" fill="#8c8c8c"/><rect x="3" y="27" width="1" height="1" fill="#8c8c8c"/><rect x="0" y="30" width="1" height="1" fill="#8c8c8c"/><rect x="3" y="30" width="1" height="1" fill="#8c8c8c"/><rect x="0" y="33" width="1" height="1" fill="#8c8c8c"/><rect x="3" y="33" width="1" height="1" fill="#8c8c8c"/><rect x="0" y="36" width="1" height="1" fill="#8c8c8c"/><rect x="3" y="36" width="1" height="1" fill="#8c8c8c"/><rect x="0" y="39" width="1" height="1" fill="#8c8c8c"/><rect x="3" y="39" width="1" height="1" fill="#8c8c8c"/><rect x="0" y="42" width="1" height="1" fill="#8c8c8c"/><rect x="3" y="42" width="1" height="1" fill="#8c8c8c"/><rect x="0" y="45" width="1" height="1" fill="#8c8c8c"/><rect x="3" y="45" width="1" height="1" fill="#8c8c8c"/><rect x="0" y="48" width="1" height="1" fill="#8c8c8c"/><rect x="3" y="48" width="1" height="1" fill="#8c8c8c"/><rect x="0" y="51" width="1" height="1" fill="#8c8c8c"/><rect x="3" y="51" width="1" height="1" fill="#8c8c8c"/><rect x="0" y="54" width="1" height="1" fill="#8c8c8c"/><rect x="3" y="54" width="1" height="1" fill="#8c8c8c"/><rect x="0" y="57" width="1" height="1" fill="#8c8c8c"/><rect x="3" y="57" width="1" height="1" fill="#8c8c8c"/><rect x="0" y="60" width="1" height="1" fill="#8c8c8c"/><rect x="3" y="60" width="1" height="1" fill="#8c8c8c"/></svg>
<div style="left:14px;top:81px;width:20px;height:63px;background:#373737;"></div>
<div style="left:19px;top:94px;width:10px;height:2px;background:#9a9a9a;"></div>
<div style="left:19px;top:97px;width:10px;height:1px;background:#cccccc;"></div>
<svg style="left:17px;top:121px" width="14" height="14" viewBox="0 0 14 14" ><circle cx="7" cy="7" r="3.3" fill="none" stroke="#c0c0c0" stroke-width="1.4"/><path d="M7 1.5 V3.5 M7 10.5 V12.5 M1.5 7 H3.5 M10.5 7 H12.5 M3.1 3.1 L4.5 4.5 M9.5 9.5 L10.9 10.9 M3.1 10.9 L4.5 9.5 M9.5 4.5 L10.9 3.1" stroke="#c0c0c0" stroke-width="1.5"/></svg>
<div style="left:39px;top:84px;width:108px;height:16px;background:#3c3c3c;border:1px solid #2e2e2e;border-bottom:none;border-radius:3px 3px 0 0;"></div>
<span style="left:49.00px;top:87.34px;font-size:12px;color:#a0a0a0;transform:scaleX(0.9071);transform-origin:0 0;">Curves / Surfaces</span>
<div style="left:149px;top:84px;width:96px;height:19px;background:#444444;border-radius:3px 3px 0 0;"></div>
<span style="left:160.00px;top:87.34px;font-size:12px;color:#eeeeee;transform:scaleX(0.9818);transform-origin:0 0;">Poly Modeling</span>
<div style="left:247px;top:84px;width:71px;height:16px;background:#3c3c3c;border:1px solid #2e2e2e;border-bottom:none;border-radius:3px 3px 0 0;"></div>
<span style="left:258.00px;top:87.34px;font-size:12px;color:#a0a0a0;transform:scaleX(0.9825);transform-origin:0 0;">Sculpting</span>
<div style="left:320px;top:84px;width:63px;height:16px;background:#3c3c3c;border:1px solid #2e2e2e;border-bottom:none;border-radius:3px 3px 0 0;"></div>
<span style="left:331.00px;top:87.34px;font-size:12px;color:#a0a0a0;transform:scaleX(0.9953);transform-origin:0 0;">Rigging</span>
<div style="left:385px;top:84px;width:75px;height:16px;background:#3c3c3c;border:1px solid #2e2e2e;border-bottom:none;border-radius:3px 3px 0 0;"></div>
<span style="left:396.00px;top:87.34px;font-size:12px;color:#a0a0a0;transform:scaleX(0.9839);transform-origin:0 0;">Animation</span>
<div style="left:462px;top:84px;width:75px;height:16px;background:#3c3c3c;border:1px solid #2e2e2e;border-bottom:none;border-radius:3px 3px 0 0;"></div>
<span style="left:473.00px;top:87.34px;font-size:12px;color:#a0a0a0;transform:scaleX(0.9663);transform-origin:0 0;">Rendering</span>
<div style="left:540px;top:84px;width:34px;height:16px;background:#3c3c3c;border:1px solid #2e2e2e;border-bottom:none;border-radius:3px 3px 0 0;"></div>
<span style="left:551.00px;top:87.34px;font-size:12px;color:#a0a0a0;letter-spacing:-3.334px;">FX</span>
<div style="left:576px;top:84px;width:79px;height:16px;background:#3c3c3c;border:1px solid #2e2e2e;border-bottom:none;border-radius:3px 3px 0 0;"></div>
<span style="left:587.00px;top:87.34px;font-size:12px;color:#a0a0a0;transform:scaleX(0.9012);transform-origin:0 0;">FX Caching</span>
<div style="left:657px;top:84px;width:62px;height:16px;background:#3c3c3c;border:1px solid #2e2e2e;border-bottom:none;border-radius:3px 3px 0 0;"></div>
<span style="left:668.00px;top:87.34px;font-size:12px;color:#a0a0a0;transform:scaleX(0.9434);transform-origin:0 0;">Custom</span>
<div style="left:721px;top:84px;width:55px;height:16px;background:#3c3c3c;border:1px solid #2e2e2e;border-bottom:none;border-radius:3px 3px 0 0;"></div>
<span style="left:731.00px;top:87.34px;font-size:12px;color:#a0a0a0;transform:scaleX(0.9557);transform-origin:0 0;">Bifrost</span>
<div style="left:778px;top:84px;width:53px;height:16px;background:#3c3c3c;border:1px solid #2e2e2e;border-bottom:none;border-radius:3px 3px 0 0;"></div>
<span style="left:788.00px;top:87.34px;font-size:12px;color:#a0a0a0;transform:scaleX(0.8797);transform-origin:0 0;">MASH</span>
<div style="left:833px;top:84px;width:107px;height:16px;background:#3c3c3c;border:1px solid #2e2e2e;border-bottom:none;border-radius:3px 3px 0 0;"></div>
<span style="left:843.00px;top:87.34px;font-size:12px;color:#a0a0a0;transform:scaleX(0.9844);transform-origin:0 0;">Motion Graphics</span>
<div style="left:942px;top:84px;width:48px;height:16px;background:#3c3c3c;border:1px solid #2e2e2e;border-bottom:none;border-radius:3px 3px 0 0;"></div>
<span style="left:952.00px;top:87.34px;font-size:12px;color:#a0a0a0;transform:scaleX(0.9125);transform-origin:0 0;">XGen</span>
<svg style="left:44.0px;top:105.0px" width="30" height="32" viewBox="-15.0 -16.0 30 32"><circle r="12.2" fill="#e79a55"/><g fill="none" stroke="#3a3a3a" stroke-width="0.9"><path d="M-12 -1 Q0 7 12 -1 M-11 5 Q0 12.5 11 5 M-3.8 -3.5 Q0 -2 3.8 -3.5"/><path d="M0 -8.5 Q-4.5 -2 -7.5 3 Q-8 7 -7 9.5 M0 -8.5 Q4.5 -2 7.5 3 Q8 7 7 9.5 M0 -8.5 Q-5 -11 -7 -9.5 M0 -8.5 Q5 -11 7 -9.5 M-7 -9.5 Q-6 -3 -11.5 -0.5 M7 -9.5 Q6 -3 11.5 -0.5"/></g></svg>
<svg style="left:78.6px;top:105.0px" width="30" height="32" viewBox="-15.0 -16.0 30 32"><path d="M0 -13.3 L11.8 -6.6 V6.8 L0 13.3 L-11.8 6.8 V-6.6 Z" fill="#e79a55"/><g fill="none" stroke="#3a3a3a" stroke-width="1"><path d="M-11.8 -6.6 L0 0.2 L11.8 -6.6 M0 0.2 V13.3 M-5.9 -9.9 L5.9 -3.2 M5.9 -9.9 L-5.9 -3.2 M-11.8 0.2 L0 6.8 L11.8 0.2 M-5.9 -3.2 V10 M5.9 -3.2 V10"/></g></svg>
<svg style="left:114.0px;top:105.0px" width="30" height="32" viewBox="-15.0 -16.0 30 32"><path d="M-10.8 -7 A10.8 5 0 0 1 10.8 -7 V7.5 A10.8 5 0 0 1 -10.8 7.5 Z" fill="#e79a55"/><g fill="none" stroke="#3a3a3a" stroke-width="1"><path d="M-10.8 -7 A10.8 5 0 0 0 10.8 -7 M-10.8 0.5 A10.8 5 0 0 0 10.8 0.5 M0 -7 V12.5 M-5.5 -2.7 V11.7 M5.5 -2.7 V11.7 M0 -7 L-6 -11 M0 -7 L6 -11 M0 -7 L0 -12 M0 -7 L-10.8 -7 M0 -7 L10.8 -7"/></g></svg>
<svg style="left:148.5px;top:105.0px" width="30" height="32" viewBox="-15.0 -16.0 30 32"><path d="M0 -12 L10 7 A10 4.5 0 0 1 -10 7 Z" fill="#e79a55"/><g fill="none" stroke="#3a3a3a" stroke-width="1"><path d="M0 -12 V11.5 M-6.3 0 Q0 3.5 6.3 0"/></g></svg>
<svg style="left:184.0px;top:105.0px" width="30" height="32" viewBox="-15.0 -16.0 30 32"><ellipse rx="9.5" ry="12.5" fill="#e79a55" transform="rotate(-25)"/><ellipse rx="3" ry="6.8" fill="#444" transform="rotate(-25)"/><g fill="none" stroke="#3a3a3a" stroke-width="1"><path d="M-3 -6 L-7 -9.5 M3.5 5.5 L7.5 9 M-2 5.5 L-4 12 M3 -5.5 L8 -7 M-3.5 0 L-10 2"/></g></svg>
<svg style="left:218.5px;top:105.0px" width="30" height="32" viewBox="-15.0 -16.0 30 32"><path d="M0 -12.5 L12.5 0 L0 12.5 L-12.5 0 Z" fill="#e79a55"/><path d="M-6.2 -6.2 L6.2 6.2 M6.2 -6.2 L-6.2 6.2" stroke="#3a3a3a" stroke-width="1" fill="none"/></svg>
<svg style="left:254.0px;top:105.0px" width="30" height="32" viewBox="-15.0 -16.0 30 32"><ellipse rx="11.5" ry="7.5" fill="#e79a55"/><path d="M-11.5 0 H11.5 M-6 -6.3 L6 6.3 M6 -6.3 L-6 6.3" stroke="#3a3a3a" stroke-width="1" fill="none"/></svg>
<div style="left:292px;top:104px;width:2px;height:35px;background:#8a8a8a;"></div>
<svg style="left:301.5px;top:105.0px" width="30" height="32" viewBox="-15.0 -16.0 30 32"><path d="M0 -13 L11.5 -6.5 V6.5 L0 13 L-11.5 6.5 V-6.5 Z" fill="#e79a55"/><g fill="none" stroke="#3a3a3a" stroke-width="1"><path d="M0 -13 L-7 -3.5 H7 Z M-7 -3.5 L0 8.5 L7 -3.5 M-11.5 -6.5 L-7 -3.5 L-11.5 6.5 L0 8.5 L11.5 6.5 L7 -3.5 L11.5 -6.5 M0 8.5 V13"/></g><path d="M13 8 V14 H7 Z" fill="#cfcfcf"/></svg>
<div style="left:339px;top:104px;width:2px;height:35px;background:#8a8a8a;"></div>
<svg style="left:348.0px;top:105.0px" width="30" height="32" viewBox="-15.0 -16.0 30 32"><path d="M0 -13 Q2.5 -2.5 13 0 Q2.5 2.5 0 13 Q-2.5 2.5 -13 0 Q-2.5 -2.5 0 -13 Z" fill="#e79a55"/><path d="M14 8 V14 H8 Z" fill="#cfcfcf"/></svg>
<span style="left:387px;top:104.3px;font-family:'Liberation Serif',serif;font-size:33px;font-weight:bold;color:#e79a55;line-height:1;transform:scaleX(0.93);transform-origin:0 0;">T</span>
<div style="left:422px;top:110px;width:22px;height:22px;background:#e79a55;"></div>
<span style="left:422.5px;top:113px;width:22px;font-size:13px;font-weight:bold;color:#3a3a3a;line-height:1;letter-spacing:-0.3px;">svg</span>
<div style="left:456px;top:104px;width:2px;height:35px;background:#8a8a8a;"></div>
<svg style="left:465.0px;top:105.0px" width="30" height="32" viewBox="-15.0 -16.0 30 32"><circle cy="2" r="7.5" fill="none" stroke="#cfcfcf" stroke-width="1.2"/><circle cy="2" r="3.2" fill="#cfcfcf"/><path d="M0 -13 V-6 M-11 10 L-6.5 7 M11 10 L6.5 7" stroke="#4fb8c8" stroke-width="1.6" fill="none"/><path d="M-4 4.5 l1.5 -1 M4 4.5 l-1.5 -1" stroke="#4fb8c8" stroke-width="1.4"/></svg>
<svg style="left:500.0px;top:105.0px" width="30" height="32" viewBox="-15.0 -16.0 30 32"><circle cx="-5.5" cy="-6" r="6.5" fill="#4fb8c8"/><path d="M-5.5 -10 V-5.5 H-2.5" stroke="#e8e8e8" stroke-width="1.2" fill="none"/><path d="M1 -2.5 H10 M-4 2.5 H10 M-6 7.5 H-3 M-1 7.5 H4" stroke="#4fb8c8" stroke-width="1.2" fill="none"/><path d="M5 5 L12 12 M12 5 L5 12" stroke="#cfcfcf" stroke-width="2" fill="none"/></svg>
<svg style="left:534.5px;top:105.0px" width="30" height="32" viewBox="-15.0 -16.0 30 32"><g stroke="#cfcfcf" stroke-width="1.1" fill="none"><path d="M0 -14 V0 M-6.5 -11 L6.5 -3 M6.5 -11 L-6.5 -3"/><path d="M-2 -13 L0 -11 L2 -13 M-2 -1 L0 -3 L2 -1 M-9 -8 L-6 -8.5 L-6.5 -11.5 M9 -8 L6 -8.5 L6.5 -11.5 M-9 -6 L-6 -5.5 L-6.5 -2.5 M9 -6 L6 -5.5 L6.5 -2.5"/></g><rect x="-13.5" y="1" width="27" height="12" fill="#3f3f3f"/><text x="0" y="11.5" font-family="Liberation Sans,sans-serif" font-size="11.5" font-weight="bold" text-anchor="middle" fill="#4fb8c8" letter-spacing="-0.2">0,0,0</text></svg>
<div style="left:573px;top:104px;width:2px;height:35px;background:#8a8a8a;"></div>
<svg style="left:582.0px;top:105.0px" width="30" height="32" viewBox="-15.0 -16.0 30 32"><circle r="12" fill="none" stroke="#cfcfcf" stroke-width="1.1"/><path d="M-10.5 3.5 L0 -1.2 L10.5 3.5 L0 8.2 Z" fill="#e79a55" stroke="#3a3a3a" stroke-width="0.7"/><path d="M-10.5 -3 L0 -7.7 L10.5 -3 L0 1.7 Z" fill="#e79a55" stroke="#3a3a3a" stroke-width="0.7"/></svg>
<svg style="left:617.0px;top:105.0px" width="30" height="32" viewBox="-15.0 -16.0 30 32"><rect x="-8.5" y="-11.5" width="9.5" height="9.5" fill="#cfcfcf"/><rect x="2" y="-11.5" width="9.5" height="9.5" fill="#cfcfcf"/><rect x="2" y="-1" width="9.5" height="9.5" fill="#cfcfcf"/><rect x="-11.5" y="2" width="9.5" height="9.5" fill="#e79a55"/></svg>
<svg style="left:651.0px;top:105.0px" width="30" height="32" viewBox="-15.0 -16.0 30 32"><path d="M-13 -5.5 L-8 -8.5 L-3 -5.5 V6 L-8 9 L-13 6 Z" fill="#e79a55"/><path d="M13 -5.5 L8 -8.5 L3 -5.5 V6 L8 9 L13 6 Z" fill="#e79a55"/><path d="M-13 -5.5 L-8 -2.5 L-3 -5.5 M-8 -2.5 V9 M13 -5.5 L8 -2.5 L3 -5.5 M8 -2.5 V9" stroke="#3a3a3a" stroke-width="0.9" fill="none"/><path d="M0 -13 V13" stroke="#cfcfcf" stroke-width="1.3" stroke-dasharray="3.2 1.6"/></svg>
<svg style="left:686.5px;top:105.0px" width="30" height="32" viewBox="-15.0 -16.0 30 32"><rect x="-12" y="-4" width="7" height="7" fill="#cfcfcf"/><rect x="-12" y="4" width="7" height="7" fill="#cfcfcf"/><rect x="-4" y="4" width="7" height="7" fill="#cfcfcf"/><rect x="-4.8" y="-13.3" width="17.3" height="17.3" fill="#444"/><rect x="-4.0" y="-12.5" width="3.2" height="3.2" fill="#e79a55"/><rect x="-4.0" y="-8.4" width="3.2" height="3.2" fill="#e79a55"/><rect x="-4.0" y="-4.300000000000001" width="3.2" height="3.2" fill="#e79a55"/><rect x="-4.0" y="-0.20000000000000107" width="3.2" height="3.2" fill="#e79a55"/><rect x="0.09999999999999964" y="-12.5" width="3.2" height="3.2" fill="#e79a55"/><rect x="0.09999999999999964" y="-8.4" width="3.2" height="3.2" fill="#e79a55"/><rect x="0.09999999999999964" y="-4.300000000000001" width="3.2" height="3.2" fill="#e79a55"/><rect x="0.09999999999999964" y="-0.20000000000000107" width="3.2" height="3.2" fill="#e79a55"/><rect x="4.199999999999999" y="-12.5" width="3.2" height="3.2" fill="#e79a55"/><rect x="4.199999999999999" y="-8.4" width="3.2" height="3.2" fill="#e79a55"/><rect x="4.199999999999999" y="-4.300000000000001" width="3.2" height="3.2" fill="#e79a55"/><rect x="4.199999999999999" y="-0.20000000000000107" width="3.2" height="3.2" fill="#e79a55"/><rect x="8.299999999999999" y="-12.5" width="3.2" height="3.2" fill="#e79a55"/><rect x="8.299999999999999" y="-8.4" width="3.2" height="3.2" fill="#e79a55"/><rect x="8.299999999999999" y="-4.300000000000001" width="3.2" height="3.2" fill="#e79a55"/><rect x="8.299999999999999" y="-0.20000000000000107" width="3.2" height="3.2" fill="#e79a55"/></svg>
<svg style="left:721.5px;top:105.0px" width="30" height="32" viewBox="-15.0 -16.0 30 32"><rect x="-12.0" y="-4.0" width="3.2" height="3.2" fill="#cfcfcf"/><rect x="-12.0" y="0.09999999999999964" width="3.2" height="3.2" fill="#cfcfcf"/><rect x="-12.0" y="4.199999999999999" width="3.2" height="3.2" fill="#cfcfcf"/><rect x="-12.0" y="8.299999999999999" width="3.2" height="3.2" fill="#cfcfcf"/><rect x="-7.9" y="-4.0" width="3.2" height="3.2" fill="#cfcfcf"/><rect x="-7.9" y="0.09999999999999964" width="3.2" height="3.2" fill="#cfcfcf"/><rect x="-7.9" y="4.199999999999999" width="3.2" height="3.2" fill="#cfcfcf"/><rect x="-7.9" y="8.299999999999999" width="3.2" height="3.2" fill="#cfcfcf"/><rect x="-3.8000000000000007" y="4.199999999999999" width="3.2" height="3.2" fill="#cfcfcf"/><rect x="-3.8000000000000007" y="8.299999999999999" width="3.2" height="3.2" fill="#cfcfcf"/><rect x="0.29999999999999893" y="4.199999999999999" width="3.2" height="3.2" fill="#cfcfcf"/><rect x="0.29999999999999893" y="8.299999999999999" width="3.2" height="3.2" fill="#cfcfcf"/><rect x="-4.8" y="-13.3" width="17.3" height="17.3" fill="#444"/><rect x="-4" y="-12.5" width="7.3" height="7.3" fill="#e79a55"/><rect x="4.2" y="-12.5" width="7.3" height="7.3" fill="#e79a55"/><rect x="-4" y="-4.3" width="7.3" height="7.3" fill="#e79a55"/><rect x="4.2" y="-4.3" width="7.3" height="7.3" fill="#e79a55"/></svg>
<svg style="left:757.0px;top:105.0px" width="30" height="32" viewBox="-15.0 -16.0 30 32"><path d="M-2 4 L6 0 L12 5 L1 12.5 L-7 8 Z" fill="#cfcfcf"/><path d="M1 7 L8 3 M3 2 L9 8" stroke="#444" stroke-width="0.9"/><path d="M-11.5 -10 L-6 -13 L-0.5 -10 V5.5 L-6 8.5 L-11.5 5.5 Z" fill="#e79a55"/><path d="M-11.5 -10 L-6 -7 L-0.5 -10 M-6 -7 V8.5" stroke="#3a3a3a" stroke-width="0.9" fill="none"/></svg>
<svg style="left:792.0px;top:105.0px" width="30" height="32" viewBox="-15.0 -16.0 30 32"><path d="M-15 -10 L-8 -14 L-1 -10 L-8 -6 Z" fill="#cfcfcf"/><path d="M-15 1 L-8 -3 L-1 1 L-8 5 Z" fill="#cfcfcf"/><path d="M1 1 L8 -3 L15 1 L8 5 Z" fill="#cfcfcf"/><path d="M1 11 L8 7 L15 11 L8 15 Z" fill="#cfcfcf"/><path d="M-7 6 L0 2 L7 6 L0 10 Z" fill="#e79a55"/><path d="M-7 -5 L0 -9 L7 -5 L0 -1 Z" fill="none" stroke="#e79a55" stroke-width="1" stroke-dasharray="1.5 1"/></svg>
<svg style="left:826.0px;top:105.0px" width="30" height="32" viewBox="-15.0 -16.0 30 32"><path d="M0 -13 L11.5 -6.5 V6.5 L0 13 L-11.5 6.5 V-6.5 Z" fill="#e79a55"/><path d="M-11.5 -6.5 L-9 -8 L0 -2.5 L9 -8 L11.5 -6.5 L1.8 -0.5 V12 L0 13 L-1.8 12 V-0.5 Z" fill="#cfcfcf"/><path d="M0 -2.5 V13" stroke="#3a3a3a" stroke-width="0.8"/></svg>
<svg style="left:861.0px;top:105.0px" width="30" height="32" viewBox="-15.0 -16.0 30 32"><rect x="-11" y="-3" width="7" height="7" fill="#cfcfcf"/><rect x="-11" y="5" width="7" height="7" fill="#cfcfcf"/><rect x="-3" y="5" width="7" height="7" fill="#cfcfcf"/><path d="M-2 -12 H4 V-5 L-1 -3 Z M5.5 -12 H13 V-5 H5.5 Z M5 -3.5 L13 -3.5 V5 L3 4 L1.5 0 Z" fill="#e79a55"/><g fill="#444" stroke="#cfcfcf" stroke-width="1"><rect x="-13" y="2.5" width="3" height="3"/><rect x="-13" y="10.5" width="3" height="3"/><rect x="-5" y="10.5" width="3" height="3"/></g><rect x="-1.5" y="-1.5" width="3" height="3" fill="#444" stroke="#e79a55" stroke-width="1"/></svg>
<svg style="left:896.5px;top:105.0px" width="30" height="32" viewBox="-15.0 -16.0 30 32"><circle r="12" fill="#e79a55"/><g stroke="#3a3a3a" stroke-width="1" fill="none"><circle r="8"/><path d="M0 -12 V12 M-12 0 H12 M-8.5 -8.5 L8.5 8.5 M8.5 -8.5 L-8.5 8.5"/></g></svg>
<svg style="left:932.0px;top:105.0px" width="30" height="32" viewBox="-15.0 -16.0 30 32"><rect x="-4" y="-12.5" width="15.5" height="15.5" rx="1" fill="#cfcfcf"/><path d="M11 -12 L4 -5" stroke="#3a3a3a" stroke-width="0.9"/><rect x="-12.5" y="-3.5" width="16" height="16" rx="1" fill="#e79a55" stroke="#444" stroke-width="1"/><path d="M-12 -3 L3 12" stroke="#3a3a3a" stroke-width="0.9"/></svg>
<svg style="left:966.5px;top:105.0px" width="30" height="32" viewBox="-15.0 -16.0 30 32"><path d="M-3 -2 L6 -7 L14 1 L-2 10 L-12 3 Z" fill="#cfcfcf"/><path d="M0 5.5 L9.5 -3 M4 -1.5 L8 5" stroke="#444" stroke-width="0.9"/><path d="M-14 0.5 L-7 -3.5 L-1 0.5 L-8 5 Z" fill="#e79a55"/><path d="M-14 -3.5 L-7 -7.5 L-1 -3.5 L-8 1 Z" fill="#e79a55" stroke="#444" stroke-width="0.8"/></svg>
<svg style="left:1002.0px;top:105.0px" width="30" height="32" viewBox="-15.0 -16.0 30 32"><rect x="-10" y="-10" width="20" height="20" fill="none" stroke="#cfcfcf" stroke-width="1.1"/><path d="M-7 -7 L-3 -3 M7 -7 L3 -3 M-7 7 L-3 3 M7 7 L3 3" stroke="#e79a55" stroke-width="1.1"/><rect x="-2" y="-2" width="4" height="4" fill="#444" stroke="#e79a55" stroke-width="1.1"/><g fill="#444" stroke="#cfcfcf" stroke-width="1"><rect x="-11.5" y="-11.5" width="3" height="3"/><rect x="8.5" y="-11.5" width="3" height="3"/><rect x="-11.5" y="8.5" width="3" height="3"/><rect x="8.5" y="8.5" width="3" height="3"/></g></svg>
<svg style="left:1036.5px;top:105.0px" width="30" height="32" viewBox="-15.0 -16.0 30 32"><rect x="-12.5" y="-2" width="4" height="4" fill="#cfcfcf"/><rect x="-12.5" y="3" width="4" height="4" fill="#cfcfcf"/><rect x="-12.5" y="8" width="4" height="4" fill="#cfcfcf"/><rect x="-7.5" y="-2" width="4" height="4" fill="#cfcfcf"/><rect x="-7.5" y="3" width="4" height="4" fill="#cfcfcf"/><rect x="-7.5" y="8" width="4" height="4" fill="#cfcfcf"/><rect x="-2.5" y="-2" width="4" height="4" fill="#cfcfcf"/><rect x="-2.5" y="3" width="4" height="4" fill="#cfcfcf"/><rect x="-2.5" y="8" width="4" height="4" fill="#cfcfcf"/><circle cx="4" cy="-3" r="9" fill="#444"/><circle cx="4" cy="-3" r="8.2" fill="#e79a55"/><path d="M-4 -5.5 H12 M-4 -0.5 H12 M1.5 -11 V5 M6.5 -11 V5" stroke="#444" stroke-width="1"/></svg>
<div style="left:1075px;top:104px;width:2px;height:35px;background:#8a8a8a;"></div>
<svg style="left:1084.0px;top:105.0px" width="30" height="32" viewBox="-15.0 -16.0 30 32"><path d="M-12 -5 V12 M-12 -5 L4 -11" stroke="#e79a55" stroke-width="1" fill="none"/><g fill="#444" stroke="#e79a55" stroke-width="1"><rect x="-13.5" y="-6.5" width="3" height="3"/><rect x="2.5" y="-12.5" width="3" height="3"/><rect x="-13.5" y="10.5" width="3" height="3"/></g><path d="M-11 11.5 L1 0 L4 3.5 Z" fill="#cfcfcf"/><path d="M2 -1 L10 -10 Q12.5 -11 13 -8.5 L5.5 2.5 Z" fill="#cfcfcf"/></svg>
<svg style="left:1118.5px;top:105.0px" width="30" height="32" viewBox="-15.0 -16.0 30 32"><rect x="-10" y="-10" width="20" height="20" fill="none" stroke="#cfcfcf" stroke-width="1.1"/><path d="M0 -10 V10" stroke="#e79a55" stroke-width="1.2"/><g fill="#444" stroke="#cfcfcf" stroke-width="1"><rect x="-11.5" y="-11.5" width="3" height="3"/><rect x="8.5" y="-11.5" width="3" height="3"/><rect x="-11.5" y="8.5" width="3" height="3"/><rect x="8.5" y="8.5" width="3" height="3"/></g><g fill="#444" stroke="#e79a55" stroke-width="1.1"><rect x="-2" y="-12" width="4" height="4"/><rect x="-2" y="8" width="4" height="4"/></g></svg>
<svg style="left:1154.5px;top:105.0px" width="30" height="32" viewBox="-15.0 -16.0 30 32"><rect x="-12" y="-10" width="9" height="9" fill="none" stroke="#cfcfcf" stroke-width="1" stroke-dasharray="2.5 2"/><g fill="#cfcfcf"><rect x="-13.5" y="-11.5" width="3" height="3"/><rect x="-5" y="-11.5" width="3" height="3"/><rect x="-13.5" y="-2.5" width="3" height="3"/><rect x="-5" y="-2.5" width="3" height="3"/></g><rect x="-13.5" y="7" width="3" height="3" fill="#e79a55"/><rect x="-5.5" y="7" width="3" height="3" fill="#e79a55"/><path d="M-4 8.5 L-1.5 3 L9.5 -8.5 Q12 -9.5 13 -7 L2 4.5 Z" fill="#cfcfcf"/></svg>
<div style="left:1192px;top:104px;width:2px;height:35px;background:#8a8a8a;"></div>
<svg style="left:1202.0px;top:105.0px" width="30" height="32" viewBox="-15.0 -16.0 30 32"><rect x="-12" y="-11" width="22" height="22" fill="#5fae8b"/><rect x="2.5" y="2.5" width="10" height="10" fill="#444"/><rect x="3.5" y="3.5" width="2.6" height="2.6" fill="#dcdcdc"/><rect x="3.5" y="6.5" width="2.6" height="2.6" fill="#444"/><rect x="3.5" y="9.5" width="2.6" height="2.6" fill="#dcdcdc"/><rect x="6.5" y="3.5" width="2.6" height="2.6" fill="#444"/><rect x="6.5" y="6.5" width="2.6" height="2.6" fill="#dcdcdc"/><rect x="6.5" y="9.5" width="2.6" height="2.6" fill="#444"/><rect x="9.5" y="3.5" width="2.6" height="2.6" fill="#dcdcdc"/><rect x="9.5" y="6.5" width="2.6" height="2.6" fill="#444"/><rect x="9.5" y="9.5" width="2.6" height="2.6" fill="#dcdcdc"/></svg>
<svg style="left:1237.5px;top:105.0px" width="30" height="32" viewBox="-15.0 -16.0 30 32"><path d="M-12 -10 Q-1 -3 10 -10 V7 Q-1 15 -12 7 Z" fill="#5fae8b"/><rect x="3.5" y="2.5" width="10" height="10" fill="#444"/><rect x="4.5" y="3.5" width="2.6" height="2.6" fill="#dcdcdc"/><rect x="4.5" y="6.5" width="2.6" height="2.6" fill="#444"/><rect x="4.5" y="9.5" width="2.6" height="2.6" fill="#dcdcdc"/><rect x="7.5" y="3.5" width="2.6" height="2.6" fill="#444"/><rect x="7.5" y="6.5" width="2.6" height="2.6" fill="#dcdcdc"/><rect x="7.5" y="9.5" width="2.6" height="2.6" fill="#444"/><rect x="10.5" y="3.5" width="2.6" height="2.6" fill="#dcdcdc"/><rect x="10.5" y="6.5" width="2.6" height="2.6" fill="#444"/><rect x="10.5" y="9.5" width="2.6" height="2.6" fill="#dcdcdc"/></svg>
<svg style="left:1272.0px;top:105.0px" width="30" height="32" viewBox="-15.0 -16.0 30 32"><path d="M-8 -9 Q0 -4 8 -9 Q13 -4 12 2 Q8 11 0 11 Q-8 11 -12 2 Q-13 -4 -8 -9 Z" fill="#5fae8b"/><rect x="4" y="2.5" width="10" height="10" fill="#444"/><rect x="5" y="3.5" width="2.6" height="2.6" fill="#dcdcdc"/><rect x="5" y="6.5" width="2.6" height="2.6" fill="#444"/><rect x="5" y="9.5" width="2.6" height="2.6" fill="#dcdcdc"/><rect x="8" y="3.5" width="2.6" height="2.6" fill="#444"/><rect x="8" y="6.5" width="2.6" height="2.6" fill="#dcdcdc"/><rect x="8" y="9.5" width="2.6" height="2.6" fill="#444"/><rect x="11" y="3.5" width="2.6" height="2.6" fill="#dcdcdc"/><rect x="11" y="6.5" width="2.6" height="2.6" fill="#444"/><rect x="11" y="9.5" width="2.6" height="2.6" fill="#dcdcdc"/></svg>
<svg style="left:1306.5px;top:105.0px" width="30" height="32" viewBox="-15.0 -16.0 30 32"><path d="M0 -13 L11 -7.5 L0 -2 L-11 -7.5 Z M-12 -5.5 L-1 0 V12.5 L-12 7 Z M1 0 L12 -5.5 V7 L1 12.5 Z" fill="#5fae8b"/><rect x="4" y="2.5" width="10" height="10" fill="#444"/><rect x="5" y="3.5" width="2.6" height="2.6" fill="#dcdcdc"/><rect x="5" y="6.5" width="2.6" height="2.6" fill="#444"/><rect x="5" y="9.5" width="2.6" height="2.6" fill="#dcdcdc"/><rect x="8" y="3.5" width="2.6" height="2.6" fill="#444"/><rect x="8" y="6.5" width="2.6" height="2.6" fill="#dcdcdc"/><rect x="8" y="9.5" width="2.6" height="2.6" fill="#444"/><rect x="11" y="3.5" width="2.6" height="2.6" fill="#dcdcdc"/><rect x="11" y="6.5" width="2.6" height="2.6" fill="#444"/><rect x="11" y="9.5" width="2.6" height="2.6" fill="#dcdcdc"/></svg>
<svg style="left:1342.0px;top:105.0px" width="30" height="32" viewBox="-15.0 -16.0 30 32"><path d="M-11 10 Q-14 -2 -4 -3 Q6 -3 6 -12" fill="none" stroke="#5fae8b" stroke-width="5.5"/><path d="M-11 10 Q-14 -2 -4 -3 Q6 -3 6 -12" fill="none" stroke="#444" stroke-width="1" transform="translate(0.3,0.2)"/><path d="M-8 11 Q-9 2 -1 1.5 Q9 1 10 -9" fill="none" stroke="#5fae8b" stroke-width="2.2"/><rect x="3.5" y="2.5" width="10" height="10" fill="#444"/><rect x="4.5" y="3.5" width="2.6" height="2.6" fill="#dcdcdc"/><rect x="4.5" y="6.5" width="2.6" height="2.6" fill="#444"/><rect x="4.5" y="9.5" width="2.6" height="2.6" fill="#dcdcdc"/><rect x="7.5" y="3.5" width="2.6" height="2.6" fill="#444"/><rect x="7.5" y="6.5" width="2.6" height="2.6" fill="#dcdcdc"/><rect x="7.5" y="9.5" width="2.6" height="2.6" fill="#444"/><rect x="10.5" y="3.5" width="2.6" height="2.6" fill="#dcdcdc"/><rect x="10.5" y="6.5" width="2.6" height="2.6" fill="#444"/><rect x="10.5" y="9.5" width="2.6" height="2.6" fill="#dcdcdc"/></svg>
<svg style="left:1376.0px;top:105.0px" width="30" height="32" viewBox="-15.0 -16.0 30 32"><rect x="-12" y="-12" width="24" height="24" fill="#5fae8b"/><rect x="-12" y="-12" width="24" height="4" fill="#dcdcdc"/><rect x="-10.5" y="-11" width="2" height="2" fill="#444"/><rect x="-7.5" y="-11" width="2" height="2" fill="#444"/><rect x="-4.5" y="-11" width="2" height="2" fill="#444"/><rect x="-6" y="-5.5" width="12" height="12" fill="#444"/><rect x="-5" y="-4.5" width="2.6" height="2.6" fill="#dcdcdc"/><rect x="-5" y="-1.5" width="2.6" height="2.6" fill="#444"/><rect x="-5" y="1.5" width="2.6" height="2.6" fill="#dcdcdc"/><rect x="-2" y="-4.5" width="2.6" height="2.6" fill="#444"/><rect x="-2" y="-1.5" width="2.6" height="2.6" fill="#dcdcdc"/><rect x="-2" y="1.5" width="2.6" height="2.6" fill="#444"/><rect x="1" y="-4.5" width="2.6" height="2.6" fill="#dcdcdc"/><rect x="1" y="-1.5" width="2.6" height="2.6" fill="#444"/><rect x="1" y="1.5" width="2.6" height="2.6" fill="#dcdcdc"/></svg>
<svg style="left:1411.0px;top:105.0px" width="30" height="32" viewBox="-15.0 -16.0 30 32"><path d="M-13 -5 L-5 -2 M13 -5 L5 -2 M-13 10 L-3 3 M13 10 L3 3 M-4 4 L0 1.5 L4 4" stroke="#5fae8b" stroke-width="2.2" fill="none"/><path d="M-14 -6.5 l5 0 l-3 4 z M14 -6.5 l-5 0 l3 4 z M-14 11 l1 -5 l4 3.5 z M14 11 l-1 -5 l-4 3.5 z" fill="#5fae8b"/><rect x="-5" y="-9.5" width="10" height="10" fill="#444"/><rect x="-4" y="-8.5" width="2.6" height="2.6" fill="#dcdcdc"/><rect x="-4" y="-5.5" width="2.6" height="2.6" fill="#444"/><rect x="-4" y="-2.5" width="2.6" height="2.6" fill="#dcdcdc"/><rect x="-1" y="-8.5" width="2.6" height="2.6" fill="#444"/><rect x="-1" y="-5.5" width="2.6" height="2.6" fill="#dcdcdc"/><rect x="-1" y="-2.5" width="2.6" height="2.6" fill="#444"/><rect x="2" y="-8.5" width="2.6" height="2.6" fill="#dcdcdc"/><rect x="2" y="-5.5" width="2.6" height="2.6" fill="#444"/><rect x="2" y="-2.5" width="2.6" height="2.6" fill="#dcdcdc"/></svg>
<svg style="left:1446.0px;top:105.0px" width="30" height="32" viewBox="-15.0 -16.0 30 32"><ellipse cx="0" cy="3" rx="6" ry="9" fill="none" stroke="#5fae8b" stroke-width="1.2" transform="rotate(20)"/><path d="M-11 -11 L8 10 L5 12 Z M11 -11 L-8 10 L-5 12 Z" fill="#cfcfcf"/><circle cx="-11" cy="-10" r="2" fill="#cfcfcf"/></svg>
<div style="left:1900px;top:104px;width:12px;height:35px;background:#3a3a3a;"></div>
<svg style="left:1899px;top:103px" width="14" height="40" viewBox="0 0 14 40" ><path d="M2.5 9 L7 4 L11.5 9 Z" fill="#b4b4b4"/><circle cx="7" cy="18.5" r="4.6" fill="#666666"/><path d="M2.5 27.5 L7 32.5 L11.5 27.5 Z" fill="#b4b4b4"/></svg>
<span style="left:58.00px;top:156.04px;font-size:12px;color:#cccccc;transform:scaleX(0.9693);transform-origin:0 0;">View</span>
<span style="left:98.50px;top:156.04px;font-size:12px;color:#cccccc;transform:scaleX(0.9538);transform-origin:0 0;">Shading</span>
<span style="left:156.50px;top:156.04px;font-size:12px;color:#cccccc;transform:scaleX(0.9992);transform-origin:0 0;">Lighting</span>
<span style="left:214.50px;top:156.04px;font-size:12px;color:#cccccc;transform:scaleX(0.9495);transform-origin:0 0;">Show</span>
<span style="left:258.50px;top:156.04px;font-size:12px;color:#cccccc;transform:scaleX(0.9296);transform-origin:0 0;">Renderer</span>
<span style="left:320.50px;top:156.04px;font-size:12px;color:#cccccc;transform:scaleX(0.8722);transform-origin:0 0;">Panels</span>
<div style="left:54.0px;top:173px;width:1px;height:17px;background:#7a7a7a;"></div>
<div style="left:53.0px;top:177px;width:3px;height:9px;background:#8a8a8a;"></div>
<svg style="left:60.0px;top:171.0px" width="20" height="20" viewBox="-10.0 -10.0 20 20"><rect x="-7.5" y="-3" width="10" height="6.5" fill="#d2d2d2"/><path d="M3.5 0.2 L7.5 -3.5 V4 Z" fill="#d2d2d2"/></svg>
<svg style="left:79.0px;top:171.0px" width="20" height="20" viewBox="-10.0 -10.0 20 20"><rect x="-6.5" y="-5" width="9" height="5" fill="#d2d2d2"/><path d="M3.5 -2.5 L7.5 -6 V1 Z" fill="#d2d2d2"/><rect x="-7.5" y="0" width="7" height="6" fill="#4fb8c8"/><path d="M-6 0 V-2 a2 2 0 0 1 4 0 V0" fill="none" stroke="#4fb8c8" stroke-width="1.3"/></svg>
<svg style="left:98.0px;top:171.0px" width="20" height="20" viewBox="-10.0 -10.0 20 20"><rect x="-6.5" y="-5" width="9" height="5" fill="#d2d2d2"/><path d="M3.5 -2.5 L7.5 -6 V1 Z" fill="#d2d2d2"/><circle cx="-3.5" cy="2.5" r="3" fill="none" stroke="#4fb8c8" stroke-width="2"/></svg>
<svg style="left:117.5px;top:171.0px" width="20" height="20" viewBox="-10.0 -10.0 20 20"><path d="M-3.5 -6 H3.5 V6 L0 3 L-3.5 6 Z" fill="#d2d2d2"/></svg>
<svg style="left:136.0px;top:171.0px" width="20" height="20" viewBox="-10.0 -10.0 20 20"><path d="M-2 4 L3 -6 V4 Z" fill="#4fb8c8"/><path d="M-7 7 L-3 1 H6 L3 7 Z" fill="#d2d2d2"/><path d="M-5 4 H5" stroke="#444" stroke-width="1"/></svg>
<svg style="left:155.0px;top:171.0px" width="20" height="20" viewBox="-10.0 -10.0 20 20"><path d="M-6 -2 H0 M-3 -6 V1 M-6 -2 l2 -1.5 v3 z M-3 -6 l-1.5 2 h3 z" stroke="#d2d2d2" stroke-width="1" fill="#d2d2d2"/><circle cx="3" cy="2" r="3" fill="none" stroke="#4fb8c8" stroke-width="1.5"/><path d="M1 4.5 L-2 7.5" stroke="#4fb8c8" stroke-width="1.8"/></svg>
<svg style="left:174.0px;top:171.0px" width="20" height="20" viewBox="-10.0 -10.0 20 20"><path d="M-5 4 L3 -5 L6 -2 L-2 6.5 Z" fill="#d2d2d2"/><path d="M-6 4.5 L-2.5 7.5 L-6.5 8 Z" fill="#4fb8c8"/><path d="M1 6 Q4 9 6 5" stroke="#d2d2d2" stroke-width="1" fill="none"/></svg>
<div style="left:198.0px;top:173px;width:1px;height:17px;background:#7a7a7a;"></div>
<div style="left:197.0px;top:177px;width:3px;height:9px;background:#8a8a8a;"></div>
<div style="left:205px;top:172px;width:18px;height:18px;background:#5285a6;"></div>
<svg style="left:204.0px;top:171.0px" width="20" height="20" viewBox="-10.0 -10.0 20 20"><rect x="-5.5" y="-5.5" width="11" height="11" fill="#f0f0f0" stroke="#333" stroke-width="1"/><path d="M-2 -5.5 V5.5 M2 -5.5 V5.5 M-5.5 -2 H5.5 M-5.5 2 H5.5" stroke="#333" stroke-width="1"/></svg>
<svg style="left:223.0px;top:171.0px" width="20" height="20" viewBox="-10.0 -10.0 20 20"><rect x="-7" y="-5.5" width="14" height="11" fill="none" stroke="#d2d2d2" stroke-width="1"/><rect x="-6" y="-3" width="12" height="6" fill="#333"/><path d="M-7 -4.3 H7 M-7 4.3 H7" stroke="#d2d2d2" stroke-width="1.6" stroke-dasharray="1.5 1.5"/></svg>
<svg style="left:242.0px;top:171.0px" width="20" height="20" viewBox="-10.0 -10.0 20 20"><rect x="-7" y="-5.5" width="14" height="11" fill="#333" stroke="#d2d2d2" stroke-width="1"/><circle r="2.7" fill="#4fb8c8"/></svg>
<div style="left:262px;top:172px;width:18px;height:18px;background:#3a3a3a;border:1px solid #353535;"></div>
<svg style="left:261.0px;top:171.0px" width="20" height="20" viewBox="-10.0 -10.0 20 20"><circle r="4" fill="#555"/></svg>
<svg style="left:280.0px;top:171.0px" width="20" height="20" viewBox="-10.0 -10.0 20 20"><rect x="-7" y="-5.5" width="14" height="11" fill="#333" stroke="#d2d2d2" stroke-width="1"/><path d="M-6 0 H6 M0 -5 V5" stroke="#4fb8c8" stroke-width="1.3" stroke-dasharray="1.2 1"/></svg>
<svg style="left:299.0px;top:171.0px" width="20" height="20" viewBox="-10.0 -10.0 20 20"><rect x="-7" y="-5.5" width="14" height="11" fill="#333" stroke="#d2d2d2" stroke-width="1"/><path d="M-5 4 L-1.5 -0.5 L2 4 Z" fill="#4fb8c8"/><circle cx="3" cy="-1.5" r="2.3" fill="#4fb8c8"/></svg>
<svg style="left:318.0px;top:171.0px" width="20" height="20" viewBox="-10.0 -10.0 20 20"><rect x="-7" y="-5.5" width="14" height="11" fill="#333" stroke="#d2d2d2" stroke-width="1"/><text x="0" y="4.3" font-family="Liberation Serif,serif" font-weight="bold" font-size="12" text-anchor="middle" fill="#4fb8c8">T</text></svg>
<div style="left:342.0px;top:173px;width:1px;height:17px;background:#7a7a7a;"></div>
<div style="left:341.0px;top:177px;width:3px;height:9px;background:#8a8a8a;"></div>
<svg style="left:348.5px;top:171.0px" width="20" height="20" viewBox="-10.0 -10.0 20 20"><path d="M0 -7 L6.5 -3.7 V3.7 L0 7 L-6.5 3.7 V-3.7 Z M-6.5 -3.7 L0 -0.4 L6.5 -3.7 M0 -0.4 V7" fill="none" stroke="#d2d2d2" stroke-width="1.1"/></svg>
<div style="left:368px;top:172px;width:18px;height:18px;background:#5285a6;"></div>
<svg style="left:367.0px;top:171.0px" width="20" height="20" viewBox="-10.0 -10.0 20 20"><path d="M0 -7.5 L7 -4 V4 L0 7.5 L-7 4 V-4 Z" fill="#3fc4d4" stroke="#333" stroke-width="0.8"/><path d="M0 -7.5 L7 -4 L0 -0.5 L-7 -4 Z" fill="#7fe3ee" stroke="#333" stroke-width="0.8"/><path d="M0 -0.5 V7.5" stroke="#333" stroke-width="0.8"/></svg>
<svg style="left:386.0px;top:171.0px" width="20" height="20" viewBox="-10.0 -10.0 20 20"><defs><pattern id="ck1" x="0" y="0" width="3" height="3" patternUnits="userSpaceOnUse"><rect width="3" height="3" fill="#e0e0e0"/><rect width="1.5" height="1.5" fill="#3a3a3a"/><rect x="1.5" y="1.5" width="1.5" height="1.5" fill="#3a3a3a"/></pattern></defs><circle r="6.5" fill="#d2d2d2"/><path d="M0 -6.5 A6.5 6.5 0 0 1 0 6.5 Z" fill="url(#ck1)"/></svg>
<svg style="left:405.5px;top:171.0px" width="20" height="20" viewBox="-10.0 -10.0 20 20"><path d="M0 -7 L6.5 -3.7 V3.7 L0 7 L-6.5 3.7 V-3.7 Z" fill="#444" stroke="#d2d2d2" stroke-width="1.1"/><path d="M0 -4.5 L4 -2.5 L0 -0.5 L-4 -2.5 Z M-4 -1.5 L-0.5 0.5 V4.5 L-4 2.5 Z M4 -1.5 L0.5 0.5 V4.5 L4 2.5 Z" fill="#4fb8c8"/></svg>
<svg style="left:424.0px;top:171.0px" width="20" height="20" viewBox="-10.0 -10.0 20 20"><circle r="6.5" fill="url(#ck1)"/></svg>
<div style="left:444px;top:172px;width:18px;height:18px;background:#5285a6;"></div>
<svg style="left:443.0px;top:171.0px" width="20" height="20" viewBox="-10.0 -10.0 20 20"><path d="M-3 2 a4.2 4.2 0 1 1 6 0 L2 5 H-2 Z" fill="#f0f0f0" stroke="#333" stroke-width="0.7"/><rect x="-1.5" y="5.5" width="3" height="2" fill="#f0f0f0" stroke="#333" stroke-width="0.5"/><g fill="#f0f0f0"><circle cx="-6" cy="-5" r="1"/><circle cx="6" cy="-5" r="1"/><circle cx="0" cy="-8" r="1"/><circle cx="-7" cy="1" r="1"/><circle cx="7" cy="1" r="1"/></g></svg>
<svg style="left:463.0px;top:171.0px" width="20" height="20" viewBox="-10.0 -10.0 20 20"><path d="M-8 4 L-1 0 L1 3 L-6 7 Z" fill="#888"/><circle cx="3" cy="-1.5" r="4.8" fill="#4fb8c8"/></svg>
<div style="left:486.0px;top:173px;width:1px;height:17px;background:#7a7a7a;"></div>
<div style="left:485.0px;top:177px;width:3px;height:9px;background:#8a8a8a;"></div>
<svg style="left:491.5px;top:171.0px" width="20" height="20" viewBox="-10.0 -10.0 20 20"><circle cy="-1.5" r="5" fill="#d2d2d2"/><path d="M-6.5 3 L0 6.5 L6.5 3" stroke="#4fb8c8" stroke-width="1.2" fill="none"/><path d="M-6.5 5 L0 8.5 L6.5 5" stroke="#4fb8c8" stroke-width="1" fill="none"/></svg>
<svg style="left:511.5px;top:171.0px" width="20" height="20" viewBox="-10.0 -10.0 20 20"><circle cx="-3" cy="3" r="4" fill="#6a6a6a"/><circle cx="0" cy="0" r="4" fill="#8a8a8a"/><circle cx="3.5" cy="-3" r="4" fill="#d2d2d2"/></svg>
<svg style="left:530.0px;top:171.0px" width="20" height="20" viewBox="-10.0 -10.0 20 20"><circle r="5.3" fill="none" stroke="#4fb8c8" stroke-width="2.4"/><path d="M0 -5.3 A5.3 5.3 0 0 1 4.5 3" fill="none" stroke="#d2d2d2" stroke-width="2.4" stroke-dasharray="1.8 1.5"/></svg>
<div style="left:550px;top:172px;width:18px;height:18px;background:#3a3a3a;border:1px solid #353535;"></div>
<svg style="left:549.0px;top:171.0px" width="20" height="20" viewBox="-10.0 -10.0 20 20"><rect x="-6" y="-6" width="7" height="7" fill="#3e5457"/><rect x="-2.5" y="-2.5" width="8" height="8" fill="#4a6b70"/></svg>
<div style="left:573.0px;top:173px;width:1px;height:17px;background:#7a7a7a;"></div>
<div style="left:572.0px;top:177px;width:3px;height:9px;background:#8a8a8a;"></div>
<svg style="left:579.0px;top:171.0px" width="20" height="20" viewBox="-10.0 -10.0 20 20"><rect x="-6.5" y="-6" width="8" height="8" fill="none" stroke="#4fb8c8" stroke-width="1.3" stroke-dasharray="2.5 1.5"/><path d="M0 -2 V8 L2.5 5.5 L4.3 9 L5.8 8.2 L4.1 4.8 L7 4.5 Z" fill="#d2d2d2"/></svg>
<div style="left:603.0px;top:173px;width:1px;height:17px;background:#7a7a7a;"></div>
<div style="left:602.0px;top:177px;width:3px;height:9px;background:#8a8a8a;"></div>
<svg style="left:609.5px;top:171.0px" width="20" height="20" viewBox="-10.0 -10.0 20 20"><rect x="-7.5" y="-7" width="15" height="14" fill="#3e3e3e"/><rect x="-2" y="-5.5" width="8" height="7" fill="none" stroke="#d2d2d2" stroke-width="1.3"/><rect x="-6" y="-2" width="8" height="7" fill="#d2d2d2" stroke="#3e3e3e" stroke-width="0.8"/></svg>
<svg style="left:628.5px;top:171.0px" width="20" height="20" viewBox="-10.0 -10.0 20 20"><rect x="-7.5" y="-7" width="15" height="14" fill="#3e3e3e"/><rect x="-2" y="-5.5" width="8" height="7" fill="none" stroke="#d2d2d2" stroke-width="1.3"/><rect x="-6" y="-1" width="7.5" height="7" fill="#d2d2d2"/></svg>
<svg style="left:647.5px;top:171.0px" width="20" height="20" viewBox="-10.0 -10.0 20 20"><rect x="-7.5" y="-7" width="15" height="14" fill="#3e3e3e"/><rect x="-5.5" y="-5.5" width="11" height="11" fill="none" stroke="#d2d2d2" stroke-width="1.2"/><path d="M-3 -3 L3.5 3.5" stroke="#d2d2d2" stroke-width="1.5"/><circle cx="-2.5" cy="-2.5" r="1.6" fill="#d2d2d2"/></svg>
<div style="left:671.0px;top:173px;width:1px;height:17px;background:#7a7a7a;"></div>
<div style="left:670.0px;top:177px;width:3px;height:9px;background:#8a8a8a;"></div>
<svg style="left:678.0px;top:171.0px" width="20" height="20" viewBox="-10.0 -10.0 20 20"><circle r="6" fill="#d2d2d2"/><path d="M0 0 L0 -6 M0 0 L5.2 3 M0 0 L-5.2 3" stroke="#444" stroke-width="1.2"/><circle r="2" fill="#444"/><path d="M-6 -1 L-1 -4 M6 -1 L2.5 3 M-2 6 L-2 1" stroke="#444" stroke-width="1"/></svg>
<div style="left:699px;top:173px;width:38px;height:15px;background:#2b2b2b;border-radius:2px;"></div>
<span style="left:704.00px;top:175.14px;font-size:12px;color:#cccccc;transform:scaleX(0.8992);transform-origin:0 0;">0.00</span>
<svg style="left:739.0px;top:171.0px" width="20" height="20" viewBox="-10.0 -10.0 20 20"><rect x="-2" y="-6" width="7.5" height="12" fill="#d2d2d2"/><circle cx="-1.5" cy="0" r="3.5" fill="#d2d2d2"/><path d="M-1.5 -3.5 A3.5 3.5 0 0 1 -1.5 3.5 Z" fill="#444"/></svg>
<div style="left:760px;top:173px;width:38px;height:15px;background:#2b2b2b;border-radius:2px;"></div>
<span style="left:765.00px;top:175.14px;font-size:12px;color:#cccccc;transform:scaleX(0.8992);transform-origin:0 0;">1.00</span>
<div style="left:801px;top:172px;width:18px;height:18px;background:#5285a6;"></div>
<svg style="left:800.0px;top:171.0px" width="20" height="20" viewBox="-10.0 -10.0 20 20"><circle r="6.8" fill="#3fb6c2" stroke="#333" stroke-width="0.8"/><text x="0" y="2.3" font-family="Liberation Sans,sans-serif" font-weight="bold" font-size="6" text-anchor="middle" fill="#2d5f66">ON</text></svg>
<div style="left:822px;top:172px;width:163px;height:18px;background:#5d5d5d;border-radius:2px;"></div>
<div style="left:964px;top:172px;width:1px;height:18px;background:#505050;"></div>
<span style="left:825.50px;top:175.14px;font-size:12px;color:#cccccc;transform:scaleX(0.8693);transform-origin:0 0;">sRGB gamma</span>
<svg style="left:969px;top:177px" width="12" height="8" viewBox="0 0 12 8" ><path d="M1 1 H11 L6 7 Z" fill="#d8d8d8"/></svg>
<span style="left:1451.00px;top:155.04px;font-size:12px;color:#cccccc;transform:scaleX(0.9104);transform-origin:0 0;">List</span>
<span style="left:1483.00px;top:155.04px;font-size:12px;color:#cccccc;transform:scaleX(0.9208);transform-origin:0 0;">Selected</span>
<span style="left:1541.00px;top:155.04px;font-size:12px;color:#cccccc;transform:scaleX(0.9181);transform-origin:0 0;">Focus</span>
<span style="left:1586.00px;top:155.04px;font-size:12px;color:#cccccc;letter-spacing:0.035px;">Attributes</span>
<span style="left:1652.00px;top:155.04px;font-size:12px;color:#cccccc;transform:scaleX(0.9661);transform-origin:0 0;">Show</span>
<span style="left:1696.00px;top:155.04px;font-size:12px;color:#cccccc;transform:scaleX(0.9725);transform-origin:0 0;">Help</span>
<div style="left:1448px;top:186px;width:449px;height:18px;background:#373737;"></div>
<div style="left:1450px;top:188px;width:43.5px;height:16px;background:#444444;border-radius:3px 3px 0 0;"></div>
<span style="left:1459.50px;top:190.84px;font-size:12px;color:#eeeeee;letter-spacing:0.247px;">file5</span>
<div style="left:1495px;top:188px;width:105px;height:16px;background:#3a3a3a;border:1px solid #4d4d4d;border-bottom:none;border-radius:3px 3px 0 0;"></div>
<span style="left:1506.00px;top:190.84px;font-size:12px;color:#a0a0a0;transform:scaleX(0.9426);transform-origin:0 0;">place2dTexture5</span>
<span style="left:1574.00px;top:240.84px;font-size:12px;color:#cccccc;letter-spacing:0.082px;">file:</span>
<div style="left:1599px;top:235px;width:154px;height:22px;background:#2b2b2b;border-radius:2px;"></div>
<span style="left:1604.00px;top:240.84px;font-size:12px;color:#cccccc;transform:scaleX(0.9994);transform-origin:0 0;">file5</span>
<svg style="left:1765px;top:226px" width="20" height="40" viewBox="0 0 20 40" ><rect x="3.5" y="2.5" width="13" height="11" fill="none" stroke="#c8c8c8" stroke-width="1.2"/><path d="M1 4.5 L6 8 L1 11.5 Z" fill="#c8c8c8" stroke="#444" stroke-width="0.6"/><rect x="1.5" y="24.5" width="13" height="11" fill="none" stroke="#c8c8c8" stroke-width="1.2"/><path d="M12 26.5 L17 30 L12 33.5 Z" fill="#c8c8c8" stroke="#444" stroke-width="0.6"/></svg>
<div style="left:1794px;top:214px;width:70px;height:20px;background:#5d5d5d;border-radius:1px;"></div>
<span style="left:1814.00px;top:219.04px;font-size:12px;color:#eeeeee;transform:scaleX(0.9181);transform-origin:0 0;">Focus</span>
<div style="left:1794px;top:236px;width:70px;height:20px;background:#5d5d5d;border-radius:1px;"></div>
<span style="left:1811.00px;top:241.04px;font-size:12px;color:#eeeeee;transform:scaleX(0.8850);transform-origin:0 0;">Presets</span>
<div style="left:1794px;top:258px;width:35px;height:20px;background:#5d5d5d;border-radius:1px;"></div>
<span style="left:1797.00px;top:263.04px;font-size:12px;color:#eeeeee;transform:scaleX(0.9661);transform-origin:0 0;">Show</span>
<div style="left:1831px;top:258px;width:35px;height:20px;background:#5d5d5d;border-radius:1px;"></div>
<span style="left:1836.50px;top:263.04px;font-size:12px;color:#eeeeee;transform:scaleX(0.9725);transform-origin:0 0;">Hide</span>
<span style="left:1560.00px;top:318.84px;font-size:12px;color:#cccccc;transform:scaleX(0.9094);transform-origin:0 0;">Sample</span>
<svg style="left:1602px;top:292px" width="64" height="64" viewBox="0 0 64 64" ><rect width="64" height="64" fill="#8f8b73"/><rect x="0.21" y="0.21" width="10.76" height="2.97" fill="#b0ab8e"/><rect x="1.77" y="3.89" width="8.49" height="3.18" fill="#b0ab8e"/><rect x="11.54" y="0.21" width="8.63" height="6.86" fill="#b0ab8e"/><rect x="20.88" y="0.21" width="5.52" height="3.82" fill="#c3be9f"/><rect x="26.89" y="0.21" width="9.55" height="3.82" fill="#b0ab8e"/><rect x="20.88" y="4.74" width="13.45" height="1.98" fill="#b0ab8e"/><rect x="37.01" y="0.21" width="6.86" height="5.80" fill="#c3be9f"/><rect x="44.59" y="0.21" width="6.72" height="5.80" fill="#9c9780"/><rect x="51.88" y="0.21" width="10.40" height="6.86" fill="#c3be9f"/><rect x="62.63" y="0.21" width="1.42" height="6.86" fill="#b0ab8e"/><rect x="0.21" y="7.78" width="7.93" height="3.54" fill="#c3be9f"/><rect x="8.85" y="7.78" width="8.35" height="3.54" fill="#b0ab8e"/><rect x="17.91" y="7.78" width="6.16" height="2.48" fill="#b0ab8e"/><rect x="24.77" y="7.08" width="9.91" height="2.83" fill="#b0ab8e"/><rect x="37.72" y="7.08" width="13.45" height="2.83" fill="#c3be9f"/><rect x="52.37" y="7.78" width="3.89" height="3.54" fill="#b0ab8e"/><rect x="56.83" y="7.78" width="7.22" height="3.54" fill="#c3be9f"/><rect x="0.21" y="11.82" width="7.22" height="1.98" fill="#b0ab8e"/><rect x="7.78" y="11.82" width="4.60" height="1.98" fill="#b0ab8e"/><rect x="12.95" y="11.82" width="4.25" height="1.98" fill="#b0ab8e"/><rect x="17.91" y="10.97" width="9.20" height="3.89" fill="#c3be9f"/><rect x="27.81" y="10.62" width="5.45" height="9.55" fill="#9c9780"/><rect x="33.97" y="10.97" width="8.14" height="8.14" fill="#b0ab8e"/><rect x="42.68" y="10.97" width="8.49" height="3.18" fill="#b0ab8e"/><rect x="53.43" y="12.03" width="7.78" height="8.14" fill="#b0ab8e"/><rect x="61.57" y="14.86" width="2.48" height="5.31" fill="#c3be9f"/><rect x="0.21" y="14.37" width="16.77" height="5.80" fill="#c3be9f"/><rect x="17.91" y="15.57" width="2.97" height="4.60" fill="#b0ab8e"/><rect x="21.59" y="15.07" width="5.10" height="11.11" fill="#c3be9f"/><rect x="42.82" y="14.86" width="6.37" height="4.25" fill="#c3be9f"/><rect x="49.89" y="14.86" width="2.83" height="4.95" fill="#b0ab8e"/><rect x="0.21" y="20.88" width="4.03" height="5.31" fill="#b0ab8e"/><rect x="4.74" y="20.88" width="16.49" height="5.31" fill="#b0ab8e"/><rect x="26.89" y="20.88" width="6.16" height="4.25" fill="#b0ab8e"/><rect x="33.97" y="20.03" width="17.69" height="4.39" fill="#c3be9f"/><rect x="52.72" y="20.88" width="3.89" height="14.86" fill="#b0ab8e"/><rect x="57.68" y="20.88" width="6.37" height="6.02" fill="#b0ab8e"/><rect x="0.21" y="26.89" width="6.86" height="8.49" fill="#b0ab8e"/><rect x="7.78" y="26.68" width="18.40" height="8.70" fill="#9c9780"/><rect x="26.89" y="25.83" width="9.41" height="9.91" fill="#b0ab8e"/><rect x="36.80" y="24.98" width="11.32" height="4.95" fill="#c3be9f"/><rect x="48.83" y="24.77" width="3.33" height="4.60" fill="#b0ab8e"/><rect x="36.80" y="30.64" width="2.48" height="5.10" fill="#b0ab8e"/><rect x="39.84" y="30.64" width="5.24" height="5.10" fill="#b0ab8e"/><rect x="45.79" y="30.08" width="6.37" height="5.66" fill="#b0ab8e"/><rect x="56.97" y="27.25" width="5.31" height="8.49" fill="#9c9780"/><rect x="0.21" y="36.80" width="9.70" height="5.66" fill="#c3be9f"/><rect x="10.62" y="36.45" width="4.60" height="5.66" fill="#c3be9f"/><rect x="15.57" y="35.74" width="19.46" height="6.37" fill="#b0ab8e"/><rect x="35.74" y="37.15" width="6.37" height="14.86" fill="#b0ab8e"/><rect x="42.82" y="37.15" width="8.35" height="9.20" fill="#c3be9f"/><rect x="51.88" y="37.15" width="11.46" height="4.25" fill="#b0ab8e"/><rect x="52.37" y="42.11" width="10.26" height="10.26" fill="#9c9780"/><rect x="0.21" y="43.52" width="4.03" height="13.45" fill="#b0ab8e"/><rect x="4.74" y="43.17" width="15.57" height="4.95" fill="#b0ab8e"/><rect x="20.88" y="42.82" width="5.52" height="5.31" fill="#c3be9f"/><rect x="27.25" y="42.82" width="7.93" height="15.57" fill="#9c9780"/><rect x="42.82" y="46.92" width="8.85" height="2.26" fill="#b0ab8e"/><rect x="42.82" y="49.75" width="7.78" height="2.62" fill="#b0ab8e"/><rect x="4.74" y="49.04" width="21.23" height="5.10" fill="#c3be9f"/><rect x="4.74" y="54.71" width="15.57" height="2.41" fill="#b0ab8e"/><rect x="20.88" y="54.85" width="5.52" height="9.06" fill="#c3be9f"/><rect x="35.74" y="53.08" width="15.43" height="4.95" fill="#b0ab8e"/><rect x="51.88" y="53.08" width="11.82" height="4.25" fill="#b0ab8e"/><rect x="0.21" y="57.68" width="2.26" height="6.23" fill="#c3be9f"/><rect x="2.83" y="57.68" width="8.14" height="6.23" fill="#9c9780"/><rect x="11.32" y="58.03" width="8.85" height="4.25" fill="#c3be9f"/><rect x="26.89" y="58.95" width="10.12" height="4.95" fill="#c3be9f"/><rect x="37.51" y="58.74" width="3.54" height="5.17" fill="#9c9780"/><rect x="41.54" y="58.74" width="2.83" height="5.17" fill="#9c9780"/><rect x="44.94" y="58.74" width="6.37" height="5.17" fill="#9c9780"/><rect x="52.72" y="58.03" width="11.32" height="5.87" fill="#c3be9f"/></svg>
<div style="left:1453px;top:366.3px;width:427px;height:19.5px;background:#5d5d5d;border-radius:2px;"></div>
<svg style="left:1458px;top:370.3px" width="14" height="10" viewBox="0 0 14 10" ><path d="M1.5 2 H13.5 L7.5 8 Z" fill="#eeeeee"/></svg>
<span style="left:1486.50px;top:370.74px;font-size:12px;color:#dddddd;font-weight:bold;transform:scaleX(0.8975);transform-origin:0 0;">File Attributes</span>
<div style="left:1455px;top:388px;width:425px;height:306px;background:#494949;"></div>
<span style="left:1545.30px;top:393.34px;font-size:12px;color:#cccccc;transform:scaleX(0.9410);transform-origin:0 0;">Filter Type</span>
<div style="left:1607px;top:389.5px;width:94px;height:19px;background:#5d5d5d;border-radius:2px;"></div>
<div style="left:1680.5px;top:389.5px;width:1px;height:19px;background:#494949;"></div>
<span style="left:1610.50px;top:393.34px;font-size:12px;color:#cccccc;transform:scaleX(0.9611);transform-origin:0 0;">Quadratic</span>
<svg style="left:1685px;top:394px" width="12" height="8" viewBox="0 0 12 8" ><path d="M1 1 H11 L6 7 Z" fill="#d8d8d8"/></svg>
<div style="left:1606px;top:413.5px;width:13px;height:13px;background:#2b2b2b;border-radius:1px;"></div>
<span style="left:1624.50px;top:414.34px;font-size:12px;color:#cccccc;transform:scaleX(0.9143);transform-origin:0 0;">Pre Filter</span>
<span style="left:1515.30px;top:434.34px;font-size:12px;color:#7d7d7d;transform:scaleX(0.9233);transform-origin:0 0;">Pre Filter Radius</span>
<div style="left:1606px;top:431.5px;width:68px;height:17.5px;background:#3c3c3c;border-radius:2px;"></div>
<span style="left:1611.00px;top:434.64px;font-size:12px;color:#6e6e6e;transform:scaleX(0.8992);transform-origin:0 0;">2.000</span>
<div style="left:1677.5px;top:437.5px;width:166px;height:3px;background:#3a3a3a;border-radius:1.5px;"></div>
<div style="left:1696.5px;top:433px;width:6px;height:12.5px;background:#6e6e6e;border-radius:2px;"></div>
<svg style="left:1851.5px;top:433.5px" width="11" height="11" viewBox="0 0 11 11" shape-rendering="crispEdges"><rect width="11" height="11" fill="#3a3a3a"/><rect x="1" y="1" width="4.5" height="4.5" fill="#6a6a6a"/><rect x="5.5" y="5.5" width="4.5" height="4.5" fill="#6a6a6a"/></svg>
<div style="left:1457px;top:451px;width:420px;height:1px;background:#404040;"></div>
<span style="left:1537.30px;top:463.34px;font-size:12px;color:#cccccc;transform:scaleX(0.9099);transform-origin:0 0;">Image Name</span>
<div style="left:1608px;top:460.5px;width:239px;height:17.5px;background:#2b2b2b;border-radius:2px;"></div>
<span style="left:1610.50px;top:463.84px;font-size:12px;color:#dddddd;transform:scaleX(0.9324);transform-origin:0 0;">in Maya\Textures\Ski_Lodge_Int_Stone_01.tga</span>
<svg style="left:1852px;top:461px" width="18" height="16" viewBox="0 0 18 16" ><path d="M0.5 15 V1.5 H6 L8 3.5 H17.5 V15 Z" fill="#c8c8c8"/></svg>
<div style="left:1606px;top:487.5px;width:70px;height:25.5px;background:#5d5d5d;border-radius:1px;"></div>
<span style="left:1623.00px;top:495.29px;font-size:12px;color:#eeeeee;transform:scaleX(0.9467);transform-origin:0 0;">Reload</span>
<div style="left:1678px;top:487.5px;width:70px;height:25.5px;background:#5d5d5d;border-radius:1px;"></div>
<span style="left:1703.00px;top:495.29px;font-size:12px;color:#eeeeee;transform:scaleX(0.9672);transform-origin:0 0;">Edit</span>
<div style="left:1750px;top:487.5px;width:70px;height:25.5px;background:#5d5d5d;border-radius:1px;"></div>
<span style="left:1772.25px;top:495.29px;font-size:12px;color:#eeeeee;transform:scaleX(0.9887);transform-origin:0 0;">View</span>
<div style="left:1457px;top:516px;width:420px;height:1px;background:#404040;"></div>
<span style="left:1520.30px;top:524.34px;font-size:12px;color:#cccccc;transform:scaleX(0.9771);transform-origin:0 0;">UV Tiling Mode</span>
<div style="left:1609px;top:520.5px;width:120px;height:18.5px;background:#5d5d5d;border-radius:2px;"></div>
<div style="left:1724.5px;top:520.5px;width:1px;height:18.5px;background:#494949;"></div>
<span style="left:1612.50px;top:524.84px;font-size:12px;color:#cccccc;letter-spacing:0.358px;">Off</span>
<div style="left:1457px;top:543.5px;width:420px;height:1px;background:#404040;"></div>
<div style="left:1606px;top:548.5px;width:13px;height:13px;background:#2b2b2b;border-radius:1px;"></div>
<span style="left:1624.50px;top:549.34px;font-size:12px;color:#cccccc;transform:scaleX(0.9142);transform-origin:0 0;">Use Image Sequence</span>
<span style="left:1523.30px;top:569.34px;font-size:12px;color:#7d7d7d;transform:scaleX(0.9388);transform-origin:0 0;">Image Number</span>
<div style="left:1606px;top:566.5px;width:68px;height:17.5px;background:#3c3c3c;border-radius:2px;"></div>
<span style="left:1612.00px;top:569.84px;font-size:12px;color:#6e6e6e;">1</span>
<svg style="left:1767.5px;top:568.5px" width="11" height="11" viewBox="0 0 11 11" shape-rendering="crispEdges"><rect width="11" height="11" fill="#3a3a3a"/><rect x="1" y="1" width="4.5" height="4.5" fill="#6a6a6a"/><rect x="5.5" y="5.5" width="4.5" height="4.5" fill="#6a6a6a"/></svg>
<span style="left:1532.30px;top:591.34px;font-size:12px;color:#7d7d7d;transform:scaleX(0.9385);transform-origin:0 0;">Frame Offset</span>
<div style="left:1606px;top:588.5px;width:68px;height:17.5px;background:#3c3c3c;border-radius:2px;"></div>
<span style="left:1611.50px;top:591.84px;font-size:12px;color:#6e6e6e;">0</span>
<svg style="left:1767.5px;top:590.5px" width="11" height="11" viewBox="0 0 11 11" shape-rendering="crispEdges"><rect width="11" height="11" fill="#3a3a3a"/><rect x="1" y="1" width="4.5" height="4.5" fill="#6a6a6a"/><rect x="5.5" y="5.5" width="4.5" height="4.5" fill="#6a6a6a"/></svg>
<div style="left:1457px;top:608.5px;width:420px;height:1px;background:#404040;"></div>
<span style="left:1539.30px;top:617.34px;font-size:12px;color:#cccccc;transform:scaleX(0.9162);transform-origin:0 0;">Color Space</span>
<div style="left:1607px;top:613.5px;width:210px;height:19.5px;background:#5d5d5d;border-radius:2px;"></div>
<div style="left:1797px;top:613.5px;width:1px;height:19.5px;background:#494949;"></div>
<span style="left:1612.50px;top:617.84px;font-size:12px;color:#eeeeee;transform:scaleX(0.8280);transform-origin:0 0;">sRGB</span>
<svg style="left:1801px;top:618.5px" width="12" height="8" viewBox="0 0 12 8" ><path d="M1 1 H11 L6 7 Z" fill="#eeeeee"/></svg>
<div style="left:1606px;top:639px;width:13px;height:13px;background:#2b2b2b;border-radius:1px;"></div>
<span style="left:1624.50px;top:639.84px;font-size:12px;color:#cccccc;transform:scaleX(0.9340);transform-origin:0 0;">Ignore Color Space File Rules</span>
<div style="left:1606px;top:658px;width:13px;height:13px;background:#2b2b2b;border-radius:1px;"></div>
<span style="left:1624.50px;top:658.84px;font-size:12px;color:#cccccc;transform:scaleX(0.8512);transform-origin:0 0;">Use BOT</span>
<div style="left:1606px;top:677px;width:13px;height:13px;background:#2b2b2b;border-radius:1px;"></div>
<span style="left:1624.50px;top:677.84px;font-size:12px;color:#cccccc;transform:scaleX(0.9330);transform-origin:0 0;">Disable File Load</span>
<div style="left:1453px;top:695.3px;width:427px;height:19.5px;background:#5d5d5d;border-radius:2px;"></div>
<svg style="left:1460px;top:697.3px" width="10" height="14" viewBox="0 0 10 14" ><path d="M2.5 1 L8.5 7 L2.5 13 Z" fill="#eeeeee"/></svg>
<span style="left:1486.50px;top:699.74px;font-size:12px;color:#dddddd;font-weight:bold;transform:scaleX(0.8957);transform-origin:0 0;">Interactive Sequence Caching Options</span>
<div style="left:1453px;top:717.3px;width:427px;height:19.5px;background:#5d5d5d;border-radius:2px;"></div>
<svg style="left:1460px;top:719.3px" width="10" height="14" viewBox="0 0 10 14" ><path d="M2.5 1 L8.5 7 L2.5 13 Z" fill="#eeeeee"/></svg>
<span style="left:1486.50px;top:721.74px;font-size:12px;color:#dddddd;font-weight:bold;transform:scaleX(0.8800);transform-origin:0 0;">Color Balance</span>
<div style="left:1453px;top:739.3px;width:427px;height:14px;background:#5d5d5d;border-radius:2px;"></div>
<svg style="left:1460px;top:741.3px" width="10" height="14" viewBox="0 0 10 14" ><path d="M2.5 1 L8.5 7 L2.5 13 Z" fill="#eeeeee"/></svg>
<span style="left:1486.50px;top:743.74px;font-size:12px;color:#dddddd;font-weight:bold;transform:scaleX(0.8498);transform-origin:0 0;">Effects</span>
<div style="left:1450px;top:753px;width:440px;height:5px;background:#444444;"></div>
<div style="left:1882px;top:363px;width:12px;height:390px;background:#3a3a3a;"></div>
<svg style="left:1882px;top:362.5px" width="12" height="12" viewBox="0 0 12 12" ><path d="M1.5 8.5 L6 3.5 L10.5 8.5 Z" fill="#c8c8c8"/></svg>
<div style="left:1883px;top:376px;width:10px;height:265px;background:#5a5a5a;border-radius:4px;"></div>
<svg style="left:1882px;top:741px" width="12" height="12" viewBox="0 0 12 12" ><path d="M1.5 3.5 L6 8.5 L10.5 3.5 Z" fill="#c8c8c8"/></svg>
<svg style="left:1597px;top:759px" width="149" height="1" viewBox="0 0 149 1" shape-rendering="crispEdges"><rect x="0" y="0" width="1" height="1" fill="#7a7a7a"/><rect x="3" y="0" width="1" height="1" fill="#7a7a7a"/><rect x="6" y="0" width="1" height="1" fill="#7a7a7a"/><rect x="9" y="0" width="1" height="1" fill="#7a7a7a"/><rect x="12" y="0" width="1" height="1" fill="#7a7a7a"/><rect x="15" y="0" width="1" height="1" fill="#7a7a7a"/><rect x="18" y="0" width="1" height="1" fill="#7a7a7a"/><rect x="21" y="0" width="1" height="1" fill="#7a7a7a"/><rect x="24" y="0" width="1" height="1" fill="#7a7a7a"/><rect x="27" y="0" width="1" height="1" fill="#7a7a7a"/><rect x="30" y="0" width="1" height="1" fill="#7a7a7a"/><rect x="33" y="0" width="1" height="1" fill="#7a7a7a"/><rect x="36" y="0" width="1" height="1" fill="#7a7a7a"/><rect x="39" y="0" width="1" height="1" fill="#7a7a7a"/><rect x="42" y="0" width="1" height="1" fill="#7a7a7a"/><rect x="45" y="0" width="1" height="1" fill="#7a7a7a"/><rect x="48" y="0" width="1" height="1" fill="#7a7a7a"/><rect x="51" y="0" width="1" height="1" fill="#7a7a7a"/><rect x="54" y="0" width="1" height="1" fill="#7a7a7a"/><rect x="57" y="0" width="1" height="1" fill="#7a7a7a"/><rect x="60" y="0" width="1" height="1" fill="#7a7a7a"/><rect x="63" y="0" width="1" height="1" fill="#7a7a7a"/><rect x="66" y="0" width="1" height="1" fill="#7a7a7a"/><rect x="69" y="0" width="1" height="1" fill="#7a7a7a"/><rect x="72" y="0" width="1" height="1" fill="#7a7a7a"/><rect x="75" y="0" width="1" height="1" fill="#7a7a7a"/><rect x="78" y="0" width="1" height="1" fill="#7a7a7a"/><rect x="81" y="0" width="1" height="1" fill="#7a7a7a"/><rect x="84" y="0" width="1" height="1" fill="#7a7a7a"/><rect x="87" y="0" width="1" height="1" fill="#7a7a7a"/><rect x="90" y="0" width="1" height="1" fill="#7a7a7a"/><rect x="93" y="0" width="1" height="1" fill="#7a7a7a"/><rect x="96" y="0" width="1" height="1" fill="#7a7a7a"/><rect x="99" y="0" width="1" height="1" fill="#7a7a7a"/><rect x="102" y="0" width="1" height="1" fill="#7a7a7a"/><rect x="105" y="0" width="1" height="1" fill="#7a7a7a"/><rect x="108" y="0" width="1" height="1" fill="#7a7a7a"/><rect x="111" y="0" width="1" height="1" fill="#7a7a7a"/><rect x="114" y="0" width="1" height="1" fill="#7a7a7a"/><rect x="117" y="0" width="1" height="1" fill="#7a7a7a"/><rect x="120" y="0" width="1" height="1" fill="#7a7a7a"/><rect x="123" y="0" width="1" height="1" fill="#7a7a7a"/><rect x="126" y="0" width="1" height="1" fill="#7a7a7a"/><rect x="129" y="0" width="1" height="1" fill="#7a7a7a"/><rect x="132" y="0" width="1" height="1" fill="#7a7a7a"/><rect x="135" y="0" width="1" height="1" fill="#7a7a7a"/><rect x="138" y="0" width="1" height="1" fill="#7a7a7a"/><rect x="141" y="0" width="1" height="1" fill="#7a7a7a"/><rect x="144" y="0" width="1" height="1" fill="#7a7a7a"/><rect x="147" y="0" width="1" height="1" fill="#7a7a7a"/></svg>
<span style="left:1456.50px;top:764.14px;font-size:12px;color:#cccccc;font-weight:bold;transform:scaleX(0.8969);transform-origin:0 0;">Notes:  file5</span>
<div style="left:1447px;top:776px;width:451px;height:89px;background:#2b2b2b;"></div>
<div style="left:1444px;top:870.5px;width:149px;height:25.5px;background:#5d5d5d;border-radius:1px;"></div>
<span style="left:1503.50px;top:878.29px;font-size:12px;color:#eeeeee;transform:scaleX(0.8995);transform-origin:0 0;">Select</span>
<div style="left:1595.5px;top:870.5px;width:153.5px;height:25.5px;background:#5d5d5d;border-radius:1px;"></div>
<span style="left:1633.00px;top:878.29px;font-size:12px;color:#eeeeee;transform:scaleX(0.9806);transform-origin:0 0;">Load Attributes</span>
<div style="left:1751px;top:870.5px;width:150px;height:25.5px;background:#5d5d5d;border-radius:1px;"></div>
<span style="left:1802.50px;top:878.29px;font-size:12px;color:#eeeeee;transform:scaleX(0.9312);transform-origin:0 0;">Copy Tab</span>
<div style="left:1904px;top:148px;width:16px;height:753px;background:#373737;"></div>
<div style="left:1904px;top:148px;width:16px;height:3px;background:#444444;"></div>
<div style="left:1904px;top:151px;width:15px;height:154px;background:#3c3c3c;border-radius:0 3px 3px 0;border:1px solid #2e2e2e;border-left:none;"></div>
<div style="left:1904px;top:307px;width:15px;height:112px;background:#3c3c3c;border-radius:0 3px 3px 0;border:1px solid #2e2e2e;border-left:none;"></div>
<div style="left:1904px;top:419px;width:16px;height:103px;background:#444444;border-radius:0 3px 3px 0;"></div>
<span style="left:1915.8px;top:161.5px;font-size:11px;color:#a0a0a0;letter-spacing:0.122px;transform:rotate(90deg);transform-origin:0 0;">Channel Box / Layer Editor</span>
<span style="left:1915.8px;top:320px;font-size:11px;color:#a0a0a0;letter-spacing:0.655px;transform:rotate(90deg);transform-origin:0 0;">Modeling Toolkit</span>
<span style="left:1915.8px;top:431px;font-size:11px;color:#eeeeee;letter-spacing:0.416px;transform:rotate(90deg);transform-origin:0 0;">Attribute Editor</span>
<svg style="left:3px;top:905px" width="4" height="34" viewBox="0 0 4 34" shape-rendering="crispEdges"><rect x="0" y="0" width="1" height="1" fill="#8c8c8c"/><rect x="3" y="0" width="1" height="1" fill="#8c8c8c"/><rect x="0" y="3" width="1" height="1" fill="#8c8c8c"/><rect x="3" y="3" width="1" height="1" fill="#8c8c8c"/><rect x="0" y="6" width="1" height="1" fill="#8c8c8c"/><rect x="3" y="6" width="1" height="1" fill="#8c8c8c"/><rect x="0" y="9" width="1" height="1" fill="#8c8c8c"/><rect x="3" y="9" width="1" height="1" fill="#8c8c8c"/><rect x="0" y="12" width="1" height="1" fill="#8c8c8c"/><rect x="3" y="12" width="1" height="1" fill="#8c8c8c"/><rect x="0" y="15" width="1" height="1" fill="#8c8c8c"/><rect x="3" y="15" width="1" height="1" fill="#8c8c8c"/><rect x="0" y="18" width="1" height="1" fill="#8c8c8c"/><rect x="3" y="18" width="1" height="1" fill="#8c8c8c"/><rect x="0" y="21" width="1" height="1" fill="#8c8c8c"/><rect x="3" y="21" width="1" height="1" fill="#8c8c8c"/><rect x="0" y="24" width="1" height="1" fill="#8c8c8c"/><rect x="3" y="24" width="1" height="1" fill="#8c8c8c"/><rect x="0" y="27" width="1" height="1" fill="#8c8c8c"/><rect x="3" y="27" width="1" height="1" fill="#8c8c8c"/><rect x="0" y="30" width="1" height="1" fill="#8c8c8c"/><rect x="3" y="30" width="1" height="1" fill="#8c8c8c"/><rect x="0" y="33" width="1" height="1" fill="#8c8c8c"/><rect x="3" y="33" width="1" height="1" fill="#8c8c8c"/></svg>
<svg style="left:3px;top:947px" width="4" height="28" viewBox="0 0 4 28" shape-rendering="crispEdges"><rect x="0" y="0" width="1" height="1" fill="#8c8c8c"/><rect x="3" y="0" width="1" height="1" fill="#8c8c8c"/><rect x="0" y="3" width="1" height="1" fill="#8c8c8c"/><rect x="3" y="3" width="1" height="1" fill="#8c8c8c"/><rect x="0" y="6" width="1" height="1" fill="#8c8c8c"/><rect x="3" y="6" width="1" height="1" fill="#8c8c8c"/><rect x="0" y="9" width="1" height="1" fill="#8c8c8c"/><rect x="3" y="9" width="1" height="1" fill="#8c8c8c"/><rect x="0" y="12" width="1" height="1" fill="#8c8c8c"/><rect x="3" y="12" width="1" height="1" fill="#8c8c8c"/><rect x="0" y="15" width="1" height="1" fill="#8c8c8c"/><rect x="3" y="15" width="1" height="1" fill="#8c8c8c"/><rect x="0" y="18" width="1" height="1" fill="#8c8c8c"/><rect x="3" y="18" width="1" height="1" fill="#8c8c8c"/><rect x="0" y="21" width="1" height="1" fill="#8c8c8c"/><rect x="3" y="21" width="1" height="1" fill="#8c8c8c"/><rect x="0" y="24" width="1" height="1" fill="#8c8c8c"/><rect x="3" y="24" width="1" height="1" fill="#8c8c8c"/><rect x="0" y="27" width="1" height="1" fill="#8c8c8c"/><rect x="3" y="27" width="1" height="1" fill="#8c8c8c"/></svg>
<svg style="left:3px;top:984px" width="4" height="26" viewBox="0 0 4 26" shape-rendering="crispEdges"><rect x="0" y="0" width="1" height="1" fill="#8c8c8c"/><rect x="3" y="0" width="1" height="1" fill="#8c8c8c"/><rect x="0" y="3" width="1" height="1" fill="#8c8c8c"/><rect x="3" y="3" width="1" height="1" fill="#8c8c8c"/><rect x="0" y="6" width="1" height="1" fill="#8c8c8c"/><rect x="3" y="6" width="1" height="1" fill="#8c8c8c"/><rect x="0" y="9" width="1" height="1" fill="#8c8c8c"/><rect x="3" y="9" width="1" height="1" fill="#8c8c8c"/><rect x="0" y="12" width="1" height="1" fill="#8c8c8c"/><rect x="3" y="12" width="1" height="1" fill="#8c8c8c"/><rect x="0" y="15" width="1" height="1" fill="#8c8c8c"/><rect x="3" y="15" width="1" height="1" fill="#8c8c8c"/><rect x="0" y="18" width="1" height="1" fill="#8c8c8c"/><rect x="3" y="18" width="1" height="1" fill="#8c8c8c"/><rect x="0" y="21" width="1" height="1" fill="#8c8c8c"/><rect x="3" y="21" width="1" height="1" fill="#8c8c8c"/><rect x="0" y="24" width="1" height="1" fill="#8c8c8c"/><rect x="3" y="24" width="1" height="1" fill="#8c8c8c"/></svg>
<div style="left:13px;top:907px;width:1612px;height:32px;background:#2b2b2b;"></div>
<div style="left:22px;top:907px;width:11px;height:32px;background:#4f4f4f;"></div>
<div style="left:13px;top:936px;width:1612px;height:2px;background:#3a3a3a;"></div>
<div style="left:22px;top:936px;width:11px;height:2px;background:#5a5a5a;"></div>
<span style="left:22.80px;top:920.84px;font-size:12px;color:#ffffff;">1</span>
<svg style="left:13px;top:907px" width="1612" height="32" viewBox="0 0 1612 32" shape-rendering="crispEdges"><rect x="60" y="14" width="2" height="14" fill="#9c9c9c"/><rect x="127" y="14" width="2" height="14" fill="#9c9c9c"/><rect x="193" y="14" width="2" height="14" fill="#9c9c9c"/><rect x="260" y="14" width="2" height="14" fill="#9c9c9c"/><rect x="326" y="14" width="2" height="14" fill="#9c9c9c"/><rect x="393" y="14" width="2" height="14" fill="#9c9c9c"/><rect x="459" y="14" width="2" height="14" fill="#9c9c9c"/><rect x="526" y="14" width="2" height="14" fill="#9c9c9c"/><rect x="592" y="14" width="2" height="14" fill="#9c9c9c"/><rect x="659" y="14" width="2" height="14" fill="#9c9c9c"/><rect x="725" y="14" width="2" height="14" fill="#9c9c9c"/><rect x="792" y="14" width="2" height="14" fill="#9c9c9c"/><rect x="858" y="14" width="2" height="14" fill="#9c9c9c"/><rect x="925" y="14" width="2" height="14" fill="#9c9c9c"/><rect x="991" y="14" width="2" height="14" fill="#9c9c9c"/><rect x="1058" y="14" width="2" height="14" fill="#9c9c9c"/><rect x="1124" y="14" width="2" height="14" fill="#9c9c9c"/><rect x="1191" y="14" width="2" height="14" fill="#9c9c9c"/><rect x="1257" y="14" width="2" height="14" fill="#9c9c9c"/><rect x="1324" y="14" width="2" height="14" fill="#9c9c9c"/><rect x="1390" y="14" width="2" height="14" fill="#9c9c9c"/><rect x="1457" y="14" width="2" height="14" fill="#9c9c9c"/><rect x="1523" y="14" width="2" height="14" fill="#9c9c9c"/><rect x="1590" y="14" width="2" height="14" fill="#9c9c9c"/></svg>
<span style="left:76.50px;top:907.29px;font-size:11px;color:#9a9a9a;">5</span>
<span style="left:143.50px;top:907.29px;font-size:11px;color:#9a9a9a;transform:scaleX(0.9482);transform-origin:0 0;">10</span>
<span style="left:209.50px;top:907.29px;font-size:11px;color:#9a9a9a;transform:scaleX(0.9482);transform-origin:0 0;">15</span>
<span style="left:276.50px;top:907.29px;font-size:11px;color:#9a9a9a;transform:scaleX(0.9482);transform-origin:0 0;">20</span>
<span style="left:342.50px;top:907.29px;font-size:11px;color:#9a9a9a;transform:scaleX(0.9482);transform-origin:0 0;">25</span>
<span style="left:409.50px;top:907.29px;font-size:11px;color:#9a9a9a;transform:scaleX(0.9482);transform-origin:0 0;">30</span>
<span style="left:475.50px;top:907.29px;font-size:11px;color:#9a9a9a;transform:scaleX(0.9482);transform-origin:0 0;">35</span>
<span style="left:542.50px;top:907.29px;font-size:11px;color:#9a9a9a;transform:scaleX(0.9482);transform-origin:0 0;">40</span>
<span style="left:608.50px;top:907.29px;font-size:11px;color:#9a9a9a;transform:scaleX(0.9482);transform-origin:0 0;">45</span>
<span style="left:675.50px;top:907.29px;font-size:11px;color:#9a9a9a;transform:scaleX(0.9482);transform-origin:0 0;">50</span>
<span style="left:741.50px;top:907.29px;font-size:11px;color:#9a9a9a;transform:scaleX(0.9482);transform-origin:0 0;">55</span>
<span style="left:808.50px;top:907.29px;font-size:11px;color:#9a9a9a;transform:scaleX(0.9482);transform-origin:0 0;">60</span>
<span style="left:874.50px;top:907.29px;font-size:11px;color:#9a9a9a;transform:scaleX(0.9482);transform-origin:0 0;">65</span>
<span style="left:941.50px;top:907.29px;font-size:11px;color:#9a9a9a;transform:scaleX(0.9482);transform-origin:0 0;">70</span>
<span style="left:1007.50px;top:907.29px;font-size:11px;color:#9a9a9a;transform:scaleX(0.9482);transform-origin:0 0;">75</span>
<span style="left:1074.50px;top:907.29px;font-size:11px;color:#9a9a9a;transform:scaleX(0.9482);transform-origin:0 0;">80</span>
<span style="left:1140.50px;top:907.29px;font-size:11px;color:#9a9a9a;transform:scaleX(0.9482);transform-origin:0 0;">85</span>
<span style="left:1207.50px;top:907.29px;font-size:11px;color:#9a9a9a;transform:scaleX(0.9482);transform-origin:0 0;">90</span>
<span style="left:1273.50px;top:907.29px;font-size:11px;color:#9a9a9a;transform:scaleX(0.9482);transform-origin:0 0;">95</span>
<span style="left:1340.50px;top:907.29px;font-size:11px;color:#9a9a9a;transform:scaleX(0.9591);transform-origin:0 0;">100</span>
<span style="left:1406.50px;top:907.29px;font-size:11px;color:#9a9a9a;transform:scaleX(0.9591);transform-origin:0 0;">105</span>
<span style="left:1473.50px;top:907.29px;font-size:11px;color:#9a9a9a;letter-spacing:0.033px;">110</span>
<span style="left:1539.50px;top:907.29px;font-size:11px;color:#9a9a9a;letter-spacing:0.033px;">115</span>
<span style="left:1606.50px;top:907.29px;font-size:11px;color:#9a9a9a;transform:scaleX(0.9591);transform-origin:0 0;">120</span>
<div style="left:1632px;top:913px;width:88px;height:18px;background:#2b2b2b;border-radius:2px;"></div>
<span style="left:1638.50px;top:917.34px;font-size:12px;color:#dddddd;">1</span>
<svg style="left:1725px;top:905px" width="190" height="35" viewBox="1725 905 190 35"><rect x="1729.7" y="914.7" width="2.50" height="12.60" rx="0.6" fill="#c3c3c3"/><path d="M1738.9 915.5 V926.5 L1733.3 921.0 Z" fill="#c3c3c3"/><path d="M1746.3 915.5 V926.5 L1740.5 921.0 Z" fill="#c3c3c3"/><rect x="1754.5" y="914.7" width="2.50" height="12.60" rx="0.6" fill="#c3c3c3"/><path d="M1767.4 914.9 V927 L1758.5 920.95 Z" fill="#c3c3c3"/><rect x="1776.8" y="914.4" width="3.50" height="13.10" rx="0.6" fill="#e8843c"/><rect x="1778" y="912" width="1" height="1.6" fill="#c3c3c3"/><rect x="1778" y="928.3" width="1" height="1.6" fill="#c3c3c3"/><path d="M1790.3 914.9 V927 L1781.5 920.95 Z" fill="#c3c3c3"/><path d="M1813.2 912.7 V929.3 L1800.5 921.0 Z" fill="#c3c3c3"/><path d="M1823.8 912.7 V929.3 L1836.7 921.0 Z" fill="#c3c3c3"/><path d="M1846.8 914.9 V927 L1856.2 920.95 Z" fill="#c3c3c3"/><rect x="1856.7" y="914.4" width="3.60" height="13.10" rx="0.6" fill="#e8843c"/><rect x="1858" y="912" width="1" height="1.6" fill="#c3c3c3"/><rect x="1858" y="928.3" width="1" height="1.6" fill="#c3c3c3"/><path d="M1869.7 914.9 V927 L1878.5 920.95 Z" fill="#c3c3c3"/><rect x="1879.6" y="914.7" width="2.80" height="12.60" rx="0.6" fill="#c3c3c3"/><path d="M1890.8 915.5 V926.5 L1896.8 921.0 Z" fill="#c3c3c3"/><path d="M1897.8 915.5 V926.5 L1903.7 921.0 Z" fill="#c3c3c3"/><rect x="1905" y="914.7" width="2.50" height="12.60" rx="0.6" fill="#c3c3c3"/></svg>
<div style="left:0px;top:943px;width:1920px;height:2px;background:#3a3a3a;"></div>
<div style="left:14px;top:950px;width:88px;height:25px;background:#2b2b2b;border-radius:3px;"></div>
<span style="left:20.00px;top:957.34px;font-size:12px;color:#dddddd;">1</span>
<div style="left:110px;top:950px;width:88px;height:25px;background:#2b2b2b;border-radius:3px;"></div>
<span style="left:116.00px;top:957.34px;font-size:12px;color:#dddddd;">1</span>
<div style="left:205px;top:950px;width:993px;height:25px;background:#3a3a3a;"></div>
<div style="left:210px;top:952px;width:599px;height:20.5px;background:#5e5e5e;border-radius:3px;"></div>
<div style="left:214px;top:955px;width:15px;height:15px;background:#b8b8b8;border-radius:4px;"></div>
<span style="left:232.50px;top:957.34px;font-size:12px;color:#dddddd;">1</span>
<div style="left:791px;top:955px;width:15px;height:15px;background:#b8b8b8;border-radius:4px;"></div>
<span style="left:768.00px;top:957.34px;font-size:12px;color:#dddddd;transform:scaleX(0.9241);transform-origin:0 0;">120</span>
<div style="left:1205px;top:950px;width:88px;height:25px;background:#2b2b2b;border-radius:3px;"></div>
<span style="left:1211.00px;top:957.34px;font-size:12px;color:#dddddd;transform:scaleX(0.9241);transform-origin:0 0;">120</span>
<div style="left:1301px;top:950px;width:88px;height:25px;background:#2b2b2b;border-radius:3px;"></div>
<span style="left:1307.00px;top:957.34px;font-size:12px;color:#dddddd;transform:scaleX(0.9241);transform-origin:0 0;">200</span>
<div style="left:1394.5px;top:952px;width:1px;height:20px;background:#7a7a7a;"></div>
<div style="left:1393.5px;top:958px;width:3px;height:8px;background:#8a8a8a;"></div>
<svg style="left:1409px;top:958px" width="11" height="8" viewBox="0 0 11 8" ><path d="M1 1 H10 L5.5 6.5 Z" fill="none" stroke="#aaaaaa" stroke-width="1"/></svg>
<div style="left:1427px;top:950px;width:100px;height:25px;background:#414141;border:1px solid #505050;border-radius:3px;"></div>
<span style="left:1432.00px;top:957.34px;font-size:12px;color:#cccccc;transform:scaleX(0.9277);transform-origin:0 0;">No Character Set</span>
<svg style="left:1538px;top:958px" width="11" height="8" viewBox="0 0 11 8" ><path d="M1 1 H10 L5.5 6.5 Z" fill="none" stroke="#aaaaaa" stroke-width="1"/></svg>
<div style="left:1555.5px;top:950px;width:101px;height:25px;background:#414141;border:1px solid #505050;border-radius:3px;"></div>
<span style="left:1561.50px;top:957.34px;font-size:12px;color:#cccccc;transform:scaleX(0.9276);transform-origin:0 0;">No Anim Layer</span>
<div style="left:1667.5px;top:952px;width:1px;height:20px;background:#7a7a7a;"></div>
<div style="left:1666.5px;top:958px;width:3px;height:8px;background:#8a8a8a;"></div>
<div style="left:1681px;top:952px;width:95px;height:19px;background:#5d5d5d;border-radius:2px;"></div>
<div style="left:1756px;top:952px;width:1px;height:19px;background:#444444;"></div>
<span style="left:1684.50px;top:957.34px;font-size:12px;color:#cccccc;transform:scaleX(0.9178);transform-origin:0 0;">24 fps</span>
<svg style="left:1760px;top:957.5px" width="12" height="8" viewBox="0 0 12 8" ><path d="M1 1 H11 L6 7 Z" fill="#d8d8d8"/></svg>
<svg style="left:1789px;top:952px" width="19" height="19" viewBox="0 0 19 19" ><path d="M4 12 a4 4 0 0 1 0 -8 H13 M15 7 a4 4 0 0 1 0 8 H6" fill="none" stroke="#c8c8c8" stroke-width="1.6"/><path d="M12 1 L16 4 L12 7 Z M7 12 L3 15 L7 18 Z" fill="#c8c8c8"/></svg>
<div style="left:1816px;top:951px;width:23px;height:23px;background:#5285a6;border:1px solid #00ee00;"></div>
<svg style="left:1818px;top:953px" width="19" height="19" viewBox="0 0 19 19" ><rect x="1" y="4" width="16" height="12" fill="none" stroke="#e8803c" stroke-width="1.4"/><path d="M1 7 H17 M1 13 H17" stroke="#e8803c" stroke-width="1"/><rect x="3.5" y="8.5" width="3" height="3.5" fill="#e0e0e0"/><rect x="7.5" y="8.5" width="3" height="3.5" fill="#e0e0e0"/><rect x="11.5" y="8.5" width="3" height="3.5" fill="#e0e0e0"/><path d="M12.5 0.5 L18.5 4 L12.5 8 Z" fill="#d8d8d8" stroke="#5285a6" stroke-width="0.6"/></svg>
<div style="left:1849.5px;top:952px;width:1px;height:20px;background:#7a7a7a;"></div>
<div style="left:1848.5px;top:958px;width:3px;height:8px;background:#8a8a8a;"></div>
<svg style="left:1861px;top:951px" width="20" height="21" viewBox="0 0 20 21" ><path d="M3 6.5 A8 8 0 0 1 17 8 M17 14 A8 8 0 0 1 3 13" fill="none" stroke="#c8c8c8" stroke-width="1.2"/><path d="M1.5 3 V7.5 H6 M18.5 17.5 V13 H14" fill="none" stroke="#c8c8c8" stroke-width="1.2"/><path d="M10 5 V15" stroke="#e8803c" stroke-width="1.8"/><path d="M5.5 10 H8 M12 10 H14.5" stroke="#e8803c" stroke-width="1.2"/></svg>
<svg style="left:1889px;top:950px" width="20" height="24" viewBox="0 0 20 24" ><circle cx="5.5" cy="6" r="3" fill="none" stroke="#c8c8c8" stroke-width="1.5"/><path d="M5.5 1.5 V3 M5.5 9 V10.5 M1 6 H2.5 M8.5 6 H10 M2.3 2.8 L3.4 3.9 M7.6 8.1 L8.7 9.2 M2.3 9.2 L3.4 8.1 M7.6 3.9 L8.7 2.8" stroke="#c8c8c8" stroke-width="1.2"/><circle cx="14.5" cy="8.5" r="2" fill="#e8803c"/><path d="M9 13 L13 11.5 L16 13.5 L18.5 12 M13.5 11.5 L11.5 16.5 L8 19 M12 16 L15.5 18 L15 22" fill="none" stroke="#e8803c" stroke-width="1.8"/></svg>
<div style="left:0px;top:980px;width:1920px;height:2px;background:#3a3a3a;"></div>
<div style="left:0px;top:1015px;width:1920px;height:2px;background:#3a3a3a;"></div>
<span style="left:24.50px;top:991.84px;font-size:12px;color:#dddddd;transform:scaleX(0.8714);transform-origin:0 0;">MEL</span>
<div style="left:59px;top:987px;width:663px;height:22.5px;background:#2b2b2b;border-radius:3px;"></div>
<svg style="left:726px;top:991px" width="1" height="14" viewBox="0 0 1 14" shape-rendering="crispEdges"><rect x="0" y="0" width="1" height="1" fill="#7a7a7a"/><rect x="0" y="3" width="1" height="1" fill="#7a7a7a"/><rect x="0" y="6" width="1" height="1" fill="#7a7a7a"/><rect x="0" y="9" width="1" height="1" fill="#7a7a7a"/><rect x="0" y="12" width="1" height="1" fill="#7a7a7a"/></svg>
<div style="left:731px;top:987px;width:1156px;height:22.5px;background:#2b2b2b;border-radius:3px;"></div>
<span style="left:737.50px;top:992.34px;font-size:12px;color:#dddddd;transform:scaleX(0.9484);transform-origin:0 0;">Undo: select -r pCube1.f[7]</span>
<svg style="left:1892px;top:988px" width="20" height="20" viewBox="0 0 20 20" ><rect x="0.5" y="0.5" width="19" height="19" fill="#c8c8c8"/><rect x="0.5" y="3.5" width="19" height="1" fill="#444"/><rect x="1.5" y="1.5" width="1" height="1" fill="#444"/><rect x="3.5" y="1.5" width="1" height="1" fill="#444"/><rect x="5.5" y="1.5" width="1" height="1" fill="#444"/><text x="10" y="16" font-family="Liberation Sans,sans-serif" font-size="11" font-weight="bold" text-anchor="middle" fill="#333">{;}</text></svg>
<svg style="left:2px;top:152px" width="38" height="4" viewBox="0 0 38 4" shape-rendering="crispEdges"><rect x="0" y="0" width="1" height="1" fill="#8c8c8c"/><rect x="0" y="3" width="1" height="1" fill="#8c8c8c"/><rect x="3" y="0" width="1" height="1" fill="#8c8c8c"/><rect x="3" y="3" width="1" height="1" fill="#8c8c8c"/><rect x="6" y="0" width="1" height="1" fill="#8c8c8c"/><rect x="6" y="3" width="1" height="1" fill="#8c8c8c"/><rect x="9" y="0" width="1" height="1" fill="#8c8c8c"/><rect x="9" y="3" width="1" height="1" fill="#8c8c8c"/><rect x="12" y="0" width="1" height="1" fill="#8c8c8c"/><rect x="12" y="3" width="1" height="1" fill="#8c8c8c"/><rect x="15" y="0" width="1" height="1" fill="#8c8c8c"/><rect x="15" y="3" width="1" height="1" fill="#8c8c8c"/><rect x="18" y="0" width="1" height="1" fill="#8c8c8c"/><rect x="18" y="3" width="1" height="1" fill="#8c8c8c"/><rect x="21" y="0" width="1" height="1" fill="#8c8c8c"/><rect x="21" y="3" width="1" height="1" fill="#8c8c8c"/><rect x="24" y="0" width="1" height="1" fill="#8c8c8c"/><rect x="24" y="3" width="1" height="1" fill="#8c8c8c"/><rect x="27" y="0" width="1" height="1" fill="#8c8c8c"/><rect x="27" y="3" width="1" height="1" fill="#8c8c8c"/><rect x="30" y="0" width="1" height="1" fill="#8c8c8c"/><rect x="30" y="3" width="1" height="1" fill="#8c8c8c"/><rect x="33" y="0" width="1" height="1" fill="#8c8c8c"/><rect x="33" y="3" width="1" height="1" fill="#8c8c8c"/><rect x="36" y="0" width="1" height="1" fill="#8c8c8c"/><rect x="36" y="3" width="1" height="1" fill="#8c8c8c"/></svg>
<div style="left:4px;top:161px;width:36px;height:36px;background:#5285a6;"></div>
<svg style="left:2.0px;top:160.0px" width="40" height="38" viewBox="-20.0 -19.0 40 38"><path d="M0 0 L0 21 L5 16.2 L8.6 24.5 L12.2 22.9 L8.6 14.8 L15.5 14.3 Z" transform="translate(-5.5,-14)" fill="#c8c8c8" stroke="#3a3a3a" stroke-width="1"/></svg>
<svg style="left:2.0px;top:197.0px" width="40" height="38" viewBox="-20.0 -19.0 40 38"><ellipse cx="-2.5" cy="-3" rx="12" ry="6.5" transform="rotate(-30 -2.5 -3)" fill="none" stroke="#4fb8c8" stroke-width="2" stroke-dasharray="4.5 2.5"/><path d="M0 0 L0 21 L5 16.2 L8.6 24.5 L12.2 22.9 L8.6 14.8 L15.5 14.3 Z" transform="translate(0,-7) scale(0.88)" fill="#c8c8c8"/></svg>
<svg style="left:2.0px;top:234.0px" width="40" height="38" viewBox="-20.0 -19.0 40 38"><ellipse cx="-3" cy="4.5" rx="12" ry="7" transform="rotate(38 -3 4.5)" fill="none" stroke="#4fb8c8" stroke-width="2" stroke-dasharray="4.5 2.5"/><path d="M4.5 -5 L12 -13" stroke="#c8c8c8" stroke-width="3.6" stroke-linecap="round"/><path d="M3 -6 L6 -2.5 Q4 4 -7 4.5 Q0 1 3 -6 Z" fill="#c8c8c8"/></svg>
<svg style="left:2.0px;top:271.0px" width="40" height="38" viewBox="-20.0 -19.0 40 38"><rect x="-6" y="-6" width="12" height="12" fill="#c8c8c8"/><path d="M-4 -10.5 L0 -14 L4 -10.5 Z M-4 10.5 L0 14 L4 10.5 Z M-10.5 -4 L-14 0 L-10.5 4 Z M10.5 -4 L14 0 L10.5 4 Z" fill="#4fb8c8"/></svg>
<svg style="left:2.0px;top:308.0px" width="40" height="38" viewBox="-20.0 -19.0 40 38"><path d="M0 -7.5 L7.5 0 L0 7.5 L-7.5 0 Z" fill="#c8c8c8"/><path d="M-1 13 A13.5 13.5 0 1 1 13.5 0" fill="none" stroke="#4fb8c8" stroke-width="1.6"/><path d="M10.5 -0.5 L16 -0.5 L13.3 3.5 Z" fill="#4fb8c8"/></svg>
<svg style="left:2.0px;top:345.0px" width="40" height="38" viewBox="-20.0 -19.0 40 38"><rect x="-12" y="-13" width="25" height="25" fill="none" stroke="#4fb8c8" stroke-width="1.2" stroke-dasharray="3.5 2"/><rect x="-12.5" y="1.5" width="11" height="11" fill="#c8c8c8"/><path d="M0 -1.5 H6 V4.5" fill="none" stroke="#4fb8c8" stroke-width="1.2"/></svg>
<div style="left:4px;top:461px;width:36px;height:2px;background:#8a8a8a;"></div>
<svg style="left:2.0px;top:467.0px" width="40" height="38" viewBox="-20.0 -19.0 40 38"><rect x="-14" y="-14" width="28" height="28" fill="#c8c8c8"/><rect x="-12" y="-12" width="24" height="24" fill="none" stroke="#444" stroke-width="1"/><path d="M0 -7.5 L4 -4 L0 -0.5 L-4 -4 Z M0 0.5 L4 4 L0 7.5 L-4 4 Z M-5 -3.5 L-1 0 L-5 3.5 L-9 0 Z M5 -3.5 L9 0 L5 3.5 L1 0 Z" fill="#3a3a3a"/></svg>
<svg style="left:2.0px;top:504.0px" width="40" height="38" viewBox="-20.0 -19.0 40 38"><rect x="-13.5" y="-13.5" width="12" height="12" fill="#333" stroke="#c8c8c8" stroke-width="1"/><rect x="1" y="-14" width="13" height="13" fill="#c8c8c8"/><rect x="-13.5" y="1.5" width="12" height="12" fill="#333" stroke="#c8c8c8" stroke-width="1"/><rect x="1.5" y="1.5" width="12" height="12" fill="#333" stroke="#c8c8c8" stroke-width="1"/><path d="M-11.0 -7.5 H-4.0 M-7.5 -11.0 V-4.0" stroke="#c8c8c8" stroke-width="1.2"/><path d="M-11.0 7.5 H-4.0 M-7.5 4.0 V11.0" stroke="#c8c8c8" stroke-width="1.2"/><path d="M4.0 7.5 H11.0 M7.5 4.0 V11.0" stroke="#c8c8c8" stroke-width="1.2"/><path d="M7.5 -10 L11.5 -7.5 L7.5 -5 L3.5 -7.5 Z" fill="#3a3a3a"/></svg>
<svg style="left:2.0px;top:541.0px" width="40" height="38" viewBox="-20.0 -19.0 40 38"><rect x="-13.5" y="-13.5" width="12" height="27" fill="#333" stroke="#c8c8c8" stroke-width="1"/><rect x="1" y="-14" width="13" height="28" fill="#c8c8c8"/><path d="M-11.0 0 H-4.0 M-7.5 -3.5 V3.5" stroke="#c8c8c8" stroke-width="1.2"/><path d="M7.5 -2.5 L11.5 0 L7.5 2.5 L3.5 0 Z" fill="#3a3a3a"/></svg>
<svg style="left:2.0px;top:578.0px" width="40" height="38" viewBox="-20.0 -19.0 40 38"><rect x="-13.5" y="-13.5" width="27" height="27" fill="#333" stroke="#c8c8c8" stroke-width="1"/><g fill="#c8c8c8"><rect x="-9" y="-10.5" width="3" height="3"/><rect x="-3" y="-5" width="3" height="3"/><rect x="-3" y="1" width="3" height="3"/><rect x="-3" y="7" width="3" height="3"/></g><path d="M-5 -9 H4 M1 -3.5 H8 M1 2.5 H5 M1 8.5 H7 M-7.5 -7.5 V8.5 M-7.5 -3.5 H-3 M-7.5 2.5 H-3 M-7.5 8.5 H-3" stroke="#c8c8c8" stroke-width="1" fill="none"/></svg>
<svg style="left:5px;top:863px" width="34" height="32" viewBox="0 0 34 32" ><defs><linearGradient id="mg1" x1="0" y1="0" x2="0" y2="1"><stop offset="0" stop-color="#1fb4b8"/><stop offset="1" stop-color="#0e7f88"/></linearGradient><linearGradient id="mg2" x1="0" y1="0" x2="0" y2="1"><stop offset="0" stop-color="#b5e0e2"/><stop offset="1" stop-color="#3aa4ab"/></linearGradient><linearGradient id="mg3" x1="0" y1="0" x2="1" y2="1"><stop offset="0" stop-color="#11a3aa"/><stop offset="1" stop-color="#2cc4c8"/></linearGradient></defs>
<path d="M1 2 L9 1 L9 30 L1 31 Z" fill="url(#mg1)"/><path d="M25 2 L33 1.5 L33 31 L25 30 Z" fill="url(#mg3)"/><path d="M24 2 L33 1.5 L20 25 L17 20 Z" fill="#14a8ae"/><path d="M1 2 L9.5 1 L20 25 L13.5 25 Z" fill="url(#mg2)"/></svg>
</div></body></html>
